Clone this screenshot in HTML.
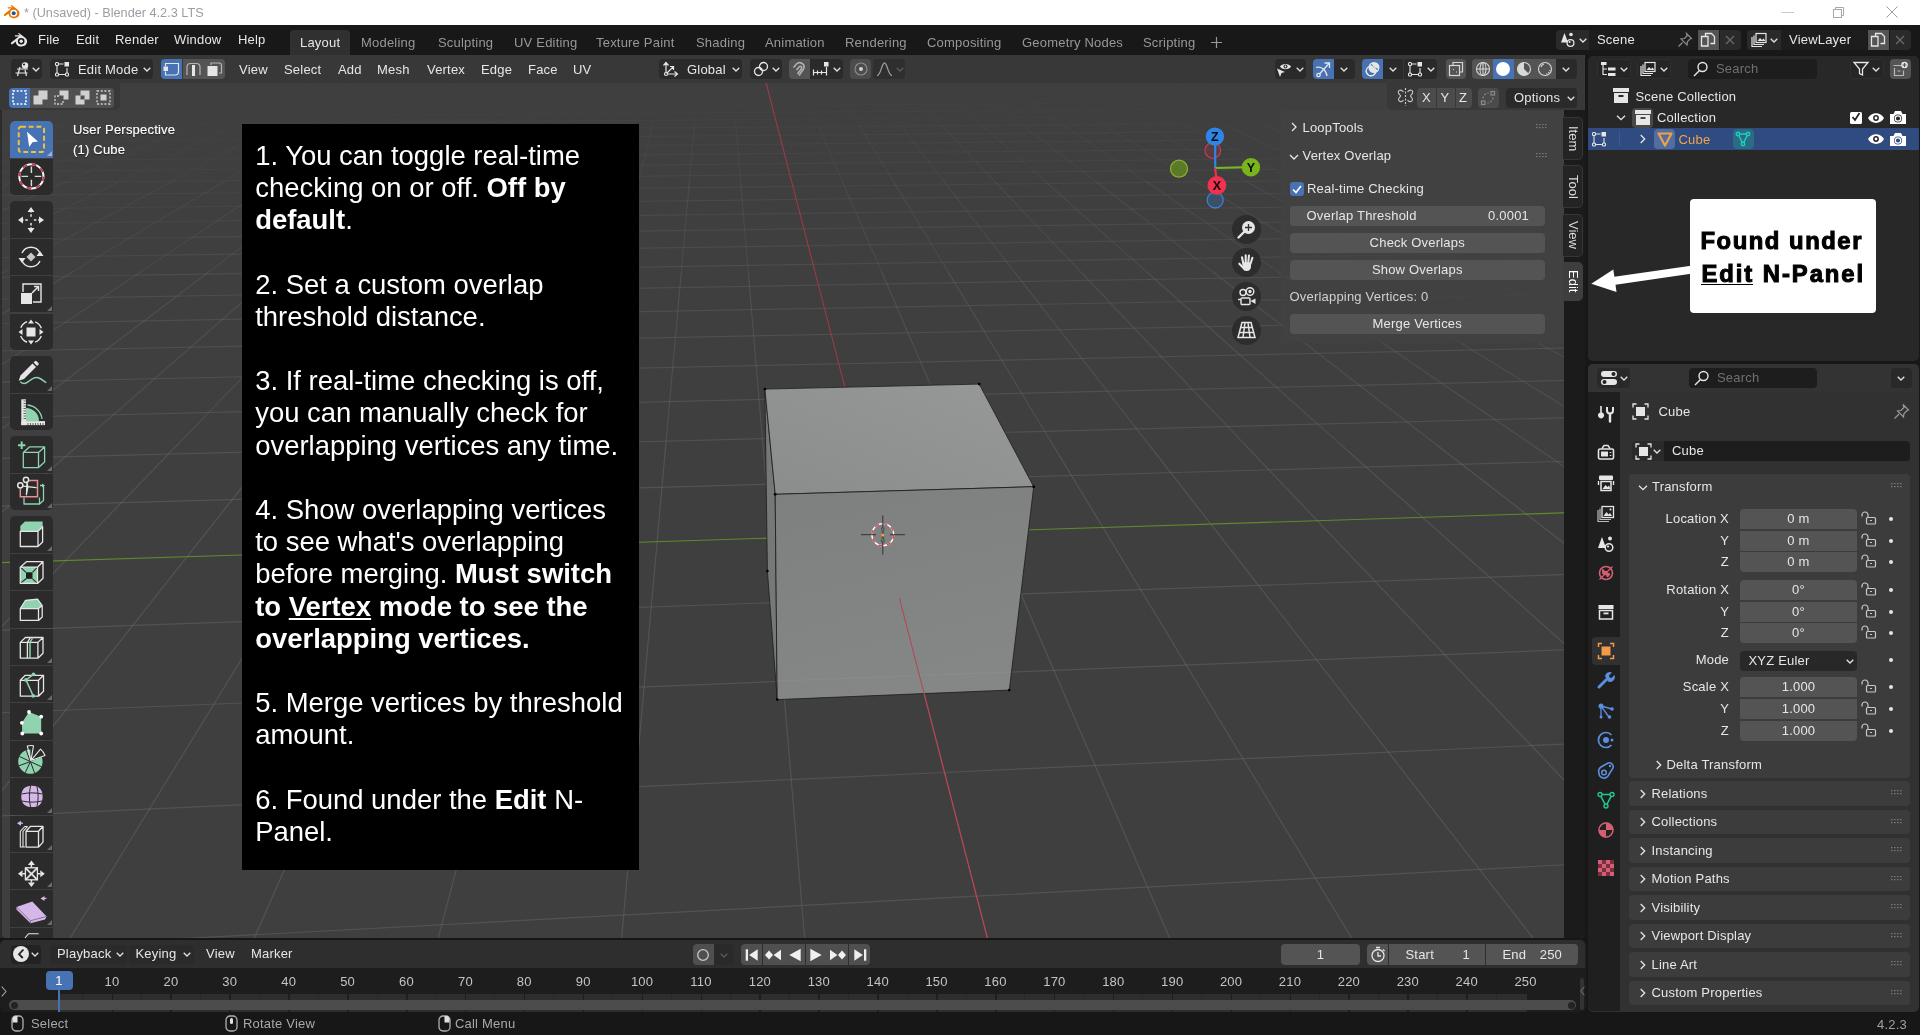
<!DOCTYPE html>
<html><head><meta charset="utf-8">
<style>
*{box-sizing:border-box;margin:0;padding:0}
html,body{width:1920px;height:1035px;overflow:hidden;background:#171717;font-family:"Liberation Sans",sans-serif;font-size:12.5px;color:#e0e0e0}
.abs{position:absolute}
.t{position:absolute;white-space:nowrap;line-height:1}
#title{position:absolute;left:0;top:0;width:1920px;height:25px;background:#fff}
#topbar{position:absolute;left:0;top:25px;width:1920px;height:30px;background:#181818}
#vp{position:absolute;left:0;top:55px;width:1585px;height:883px;background:#3f3f3f;overflow:hidden;border-radius:0 0 5px 5px}
#outl{position:absolute;left:1588px;top:55.5px;width:330.7px;height:305.5px;background:#282828;border-radius:5px;overflow:hidden}
#props{position:absolute;left:1588px;top:364px;width:330.7px;height:647.5px;background:#313131;border-radius:5px;overflow:hidden}
#tl{position:absolute;left:0;top:940px;width:1586px;height:72px;background:#1d1d1d;border-radius:5px;overflow:hidden}
#status{position:absolute;left:0;top:1012px;width:1920px;height:23px;background:#171717}

.b{position:absolute;height:20px;border-radius:4px;background:#2a2a2a}
.b.l{background:#545454}
.b.a{background:#4772b3}
.x{position:absolute;white-space:nowrap;font-size:13px;line-height:20px;height:20px;color:#e6e6e6;letter-spacing:.2px}
.x.d{color:#989898}
svg{position:absolute;overflow:visible}
.chev{position:absolute;width:8px;height:5px}
</style></head><body>
<div id="wrap" style="position:absolute;left:0;top:0;width:1920px;height:1035px;will-change:transform">
<div id="title">
<svg style="left:2.500px;top:4px" width="17" height="16" viewBox="0 0 17 16"><path d="M1.2 10.2 L8.3 4.6 L5.2 4.6 C4.3 4.6 4.3 3.3 5.2 3.3 L9.6 3.3 L8.2 2.2 C7.5 1.6 8.3 0.7 9 1.3 L15 6 C17.6 8.4 16.6 12.2 14 13.6 C11.2 15.2 7.3 14.3 6 11.6 C5.6 10.8 5.6 10 5.7 9.5 L2.3 12 C1.3 12.7 0.4 11 1.2 10.2Z" fill="#ea7600"/><circle cx="10.7" cy="9.2" r="3.4" fill="#fff"/><circle cx="10.7" cy="9.2" r="2" fill="#265787"/></svg>
<div class="x" style="left:24px;top:3px;font-size:12.7px;color:#9a9ea3;letter-spacing:0">* (Unsaved) - Blender 4.2.3 LTS</div>
<svg style="left:1786px;top:4px" width="120" height="18" viewBox="0 0 120 18" fill="none" stroke="#a8a8a8" stroke-width="1"><path d="M-4.500 8.500h12.500" stroke="#c8c8c8"/><rect x="47.5" y="5.5" width="8" height="8"/><path d="M49.5 5.5v-2h8v8h-2"/><path d="M100.500 2.500l11 11M111.500 2.500l-11 11" stroke="#a0a0a0"/></svg>
</div>
<div id="topbar">
<svg style="left:10px;top:7px" width="18" height="16" viewBox="0 0 18 16"><path d="M1.200 10.400L8.800 4.600H5.400C4.500 4.600 4.500 3.300 5.400 3.300H10L8.500 2.100C7.800 1.500 8.600.6 9.300 1.200L15.500 6C18.200 8.400 17.200 12.300 14.500 13.800 11.600 15.400 7.600 14.500 6.200 11.700 5.800 10.900 5.800 10.100 5.900 9.600L2.400 12.200C1.400 12.900.4 11.200 1.200 10.400Z" fill="#e6e6e6"/><circle cx="11.200" cy="9.300" r="3.300" fill="#181818"/><circle cx="11.200" cy="9.300" r="1.700" fill="#e6e6e6"/></svg>
<div class="x" style="left:38px;top:5px">File</div>
<div class="x" style="left:76px;top:5px">Edit</div>
<div class="x" style="left:115px;top:5px">Render</div>
<div class="x" style="left:174px;top:5px">Window</div>
<div class="x" style="left:238px;top:5px">Help</div>
<div class="abs" style="left:290px;top:5px;width:60px;height:25px;background:#303030;border-radius:4px 4px 0 0"></div><div class="x" style="left:300px;top:7.500px">Layout</div>
<div class="x d" style="left:361px;top:7.500px">Modeling</div>
<div class="x d" style="left:438px;top:7.500px">Sculpting</div>
<div class="x d" style="left:514px;top:7.500px">UV Editing</div>
<div class="x d" style="left:596px;top:7.500px">Texture Paint</div>
<div class="x d" style="left:696px;top:7.500px">Shading</div>
<div class="x d" style="left:765px;top:7.500px">Animation</div>
<div class="x d" style="left:845px;top:7.500px">Rendering</div>
<div class="x d" style="left:927px;top:7.500px">Compositing</div>
<div class="x d" style="left:1022px;top:7.500px">Geometry Nodes</div>
<div class="x d" style="left:1143px;top:7.500px">Scripting</div>
<svg style="left:1211px;top:12px" width="11" height="11" viewBox="0 0 11 11"><path d="M5.500 0v11M0 5.500h11" stroke="#989898" stroke-width="1.200"/></svg>
<div class="b" style="left:1556px;top:5px;width:33px;border-radius:4px 0 0 4px"></div><div class="b" style="left:1589px;top:5px;width:108px;background:#1d1d1d;border-radius:0"></div><div class="x" style="left:1597px;top:5px">Scene</div><div class="b l" style="left:1697.500px;top:5px;width:21.500px;border-radius:0"></div><div class="b" style="left:1719.500px;top:5px;width:21.500px;border-radius:0 4px 4px 0"></div><div class="b" style="left:1747px;top:5px;width:34px;border-radius:4px 0 0 4px"></div><div class="b" style="left:1781px;top:5px;width:86px;background:#1d1d1d;border-radius:0"></div><div class="x" style="left:1789px;top:5px">ViewLayer</div><div class="b l" style="left:1867.500px;top:5px;width:21.500px;border-radius:0"></div><div class="b" style="left:1889.500px;top:5px;width:21.500px;border-radius:0 4px 4px 0"></div>
<svg style="left:1579px;top:13px" width="8" height="5" viewBox="0 0 8 5"><path d="M0.700 0.700L4 4l3.300-3.300" fill="none" stroke="#e0e0e0" stroke-width="1.3"/></svg><svg style="left:1770px;top:13px" width="8" height="5" viewBox="0 0 8 5"><path d="M0.700 0.700L4 4l3.300-3.300" fill="none" stroke="#e0e0e0" stroke-width="1.3"/></svg><svg style="left:1560px;top:7px" width="17" height="16" viewBox="0 0 17 16"><path d="M4.500 1L8 10.500H1Z" fill="#e6e6e6"/><circle cx="11" cy="2.500" r="1.800" fill="#e6e6e6"/><circle cx="10.500" cy="11" r="3.400" fill="#2a2a2a" stroke="#e6e6e6" stroke-width="1.300"/><circle cx="9.600" cy="10" r="1" fill="#e6e6e6"/></svg><svg style="left:1677px;top:7px" width="16" height="16" viewBox="0 0 16 16" fill="none" stroke="#8c8c8c" stroke-width="1.200"><path d="M9.500 1.500l5 5-1.500.5-2.500 2.500-.5 3.500-6-6 3.500-.5L10 4zM5.500 10.500l-4 4"/></svg><svg style="left:1700px;top:7px" width="16" height="16" viewBox="0 0 16 16" fill="none" stroke="#e6e6e6" stroke-width="1.300"><path d="M5.500 4.500v-3h6l3 3v7h-4"/><path d="M1.500 4.500h6.500v9.500h-6.500z" /></svg><svg style="left:1725px;top:10px" width="10" height="10" viewBox="0 0 10 10"><path d="M1 1l8 8M9 1l-8 8" stroke="#6a6a6a" stroke-width="1.300"/></svg><svg style="left:1870px;top:7px" width="16" height="16" viewBox="0 0 16 16" fill="none" stroke="#e6e6e6" stroke-width="1.300"><path d="M5.500 4.500v-3h6l3 3v7h-4"/><path d="M1.500 4.500h6.500v9.500h-6.500z" /></svg><svg style="left:1895px;top:10px" width="10" height="10" viewBox="0 0 10 10"><path d="M1 1l8 8M9 1l-8 8" stroke="#6a6a6a" stroke-width="1.300"/></svg><svg style="left:1751px;top:7px" width="17" height="16" viewBox="0 0 17 16" fill="none" stroke="#e6e6e6" stroke-width="1.200"><path d="M1 5v9.500h10"/><path d="M3 3.500v9h10"/><rect x="5" y="1.500" width="10" height="9" fill="#2a2a2a"/><path d="M6.500 9l2.500-3 2 2 1.500-1.500 2 2.500z" fill="#e6e6e6" stroke="none"/></svg>
</div>
<div id="vp">
<svg class="abs" style="left:0;top:0" width="1586" height="883" viewBox="0 55 1586 883">
<line x1="405.4" y1="95.2" x2="768.7" y2="93.1" stroke="#6c6c6c" stroke-opacity="0.03" stroke-width="1.2"/>
<line x1="768.7" y1="93.1" x2="1117.3" y2="91.0" stroke="#6c6c6c" stroke-opacity="0.03" stroke-width="1.2"/>
<line x1="396.1" y1="101.4" x2="770.3" y2="99.1" stroke="#6c6c6c" stroke-opacity="0.04" stroke-width="1.2"/>
<line x1="770.3" y1="99.1" x2="1128.8" y2="96.9" stroke="#6c6c6c" stroke-opacity="0.04" stroke-width="1.2"/>
<line x1="-17.2" y1="110.7" x2="386.3" y2="108.0" stroke="#6c6c6c" stroke-opacity="0.02" stroke-width="1.2"/>
<line x1="386.3" y1="108.0" x2="771.9" y2="105.5" stroke="#6c6c6c" stroke-opacity="0.06" stroke-width="1.2"/>
<line x1="771.9" y1="105.5" x2="1141.0" y2="103.0" stroke="#6c6c6c" stroke-opacity="0.05" stroke-width="1.2"/>
<line x1="-41.0" y1="117.9" x2="375.8" y2="115.0" stroke="#6c6c6c" stroke-opacity="0.03" stroke-width="1.2"/>
<line x1="375.8" y1="115.0" x2="773.7" y2="112.2" stroke="#6c6c6c" stroke-opacity="0.07" stroke-width="1.2"/>
<line x1="773.7" y1="112.2" x2="1153.9" y2="109.6" stroke="#6c6c6c" stroke-opacity="0.07" stroke-width="1.2"/>
<line x1="-66.5" y1="125.7" x2="364.6" y2="122.5" stroke="#6c6c6c" stroke-opacity="0.05" stroke-width="1.2"/>
<line x1="364.6" y1="122.5" x2="775.5" y2="119.4" stroke="#6c6c6c" stroke-opacity="0.09" stroke-width="1.2"/>
<line x1="775.5" y1="119.4" x2="1167.7" y2="116.5" stroke="#6c6c6c" stroke-opacity="0.08" stroke-width="1.2"/>
<line x1="1167.7" y1="116.5" x2="1542.3" y2="113.7" stroke="#6c6c6c" stroke-opacity="0.03" stroke-width="1.2"/>
<line x1="-93.8" y1="133.9" x2="352.7" y2="130.4" stroke="#6c6c6c" stroke-opacity="0.06" stroke-width="1.2"/>
<line x1="352.7" y1="130.4" x2="777.5" y2="127.1" stroke="#6c6c6c" stroke-opacity="0.10" stroke-width="1.2"/>
<line x1="777.5" y1="127.1" x2="1182.3" y2="123.9" stroke="#6c6c6c" stroke-opacity="0.10" stroke-width="1.2"/>
<line x1="1182.3" y1="123.9" x2="1568.4" y2="120.9" stroke="#6c6c6c" stroke-opacity="0.04" stroke-width="1.2"/>
<line x1="-20.4" y1="124.7" x2="-194.2" y2="180.5" stroke="#6c6c6c" stroke-opacity="0.05" stroke-width="1.2"/>
<line x1="-123.0" y1="142.8" x2="339.9" y2="139.0" stroke="#6c6c6c" stroke-opacity="0.07" stroke-width="1.2"/>
<line x1="339.9" y1="139.0" x2="779.6" y2="135.3" stroke="#6c6c6c" stroke-opacity="0.12" stroke-width="1.2"/>
<line x1="779.6" y1="135.3" x2="1197.9" y2="131.8" stroke="#6c6c6c" stroke-opacity="0.11" stroke-width="1.2"/>
<line x1="1197.9" y1="131.8" x2="1596.3" y2="128.5" stroke="#6c6c6c" stroke-opacity="0.05" stroke-width="1.2"/>
<line x1="22.4" y1="124.7" x2="-141.4" y2="180.6" stroke="#6c6c6c" stroke-opacity="0.06" stroke-width="1.2"/>
<line x1="-154.4" y1="152.4" x2="326.2" y2="148.1" stroke="#6c6c6c" stroke-opacity="0.08" stroke-width="1.2"/>
<line x1="326.2" y1="148.1" x2="781.9" y2="144.1" stroke="#6c6c6c" stroke-opacity="0.14" stroke-width="1.2"/>
<line x1="781.9" y1="144.1" x2="1214.6" y2="140.2" stroke="#6c6c6c" stroke-opacity="0.13" stroke-width="1.2"/>
<line x1="1214.6" y1="140.2" x2="1626.0" y2="136.6" stroke="#6c6c6c" stroke-opacity="0.06" stroke-width="1.2"/>
<line x1="65.0" y1="124.7" x2="-88.6" y2="180.6" stroke="#6c6c6c" stroke-opacity="0.07" stroke-width="1.2"/>
<line x1="-188.3" y1="162.7" x2="311.4" y2="158.0" stroke="#6c6c6c" stroke-opacity="0.10" stroke-width="1.2"/>
<line x1="311.4" y1="158.0" x2="784.4" y2="153.5" stroke="#6c6c6c" stroke-opacity="0.15" stroke-width="1.2"/>
<line x1="784.4" y1="153.5" x2="1232.5" y2="149.3" stroke="#6c6c6c" stroke-opacity="0.14" stroke-width="1.2"/>
<line x1="1232.5" y1="149.3" x2="1657.9" y2="145.3" stroke="#6c6c6c" stroke-opacity="0.08" stroke-width="1.2"/>
<line x1="107.6" y1="124.7" x2="-36.0" y2="180.6" stroke="#6c6c6c" stroke-opacity="0.08" stroke-width="1.2"/>
<line x1="-36.0" y1="180.6" x2="-268.5" y2="271.1" stroke="#6c6c6c" stroke-opacity="0.15" stroke-width="1.2"/>
<line x1="-224.9" y1="173.8" x2="295.5" y2="168.6" stroke="#6c6c6c" stroke-opacity="0.11" stroke-width="1.2"/>
<line x1="295.5" y1="168.6" x2="787.0" y2="163.7" stroke="#6c6c6c" stroke-opacity="0.17" stroke-width="1.2"/>
<line x1="787.0" y1="163.7" x2="1251.8" y2="159.0" stroke="#6c6c6c" stroke-opacity="0.16" stroke-width="1.2"/>
<line x1="1251.8" y1="159.0" x2="1692.0" y2="154.6" stroke="#6c6c6c" stroke-opacity="0.09" stroke-width="1.2"/>
<line x1="150.1" y1="124.7" x2="16.5" y2="180.6" stroke="#6c6c6c" stroke-opacity="0.08" stroke-width="1.2"/>
<line x1="16.5" y1="180.6" x2="-199.8" y2="271.1" stroke="#6c6c6c" stroke-opacity="0.16" stroke-width="1.2"/>
<line x1="-264.6" y1="185.8" x2="278.3" y2="180.1" stroke="#6c6c6c" stroke-opacity="0.13" stroke-width="1.2"/>
<line x1="278.3" y1="180.1" x2="789.8" y2="174.6" stroke="#6c6c6c" stroke-opacity="0.19" stroke-width="1.2"/>
<line x1="789.8" y1="174.6" x2="1272.5" y2="169.5" stroke="#6c6c6c" stroke-opacity="0.18" stroke-width="1.2"/>
<line x1="1272.5" y1="169.5" x2="1728.7" y2="164.6" stroke="#6c6c6c" stroke-opacity="0.10" stroke-width="1.2"/>
<line x1="192.4" y1="124.7" x2="68.8" y2="180.6" stroke="#6c6c6c" stroke-opacity="0.09" stroke-width="1.2"/>
<line x1="68.8" y1="180.6" x2="-131.2" y2="271.1" stroke="#6c6c6c" stroke-opacity="0.17" stroke-width="1.2"/>
<line x1="-307.8" y1="199.0" x2="259.7" y2="192.5" stroke="#6c6c6c" stroke-opacity="0.14" stroke-width="1.2"/>
<line x1="259.7" y1="192.5" x2="792.9" y2="186.5" stroke="#6c6c6c" stroke-opacity="0.21" stroke-width="1.2"/>
<line x1="792.9" y1="186.5" x2="1294.9" y2="180.8" stroke="#6c6c6c" stroke-opacity="0.19" stroke-width="1.2"/>
<line x1="1294.9" y1="180.8" x2="1768.3" y2="175.4" stroke="#6c6c6c" stroke-opacity="0.12" stroke-width="1.2"/>
<line x1="311.9" y1="86.8" x2="234.7" y2="124.7" stroke="#6c6c6c" stroke-opacity="0.02" stroke-width="1.2"/>
<line x1="234.7" y1="124.7" x2="121.1" y2="180.7" stroke="#6c6c6c" stroke-opacity="0.10" stroke-width="1.2"/>
<line x1="121.1" y1="180.7" x2="-62.8" y2="271.2" stroke="#6c6c6c" stroke-opacity="0.18" stroke-width="1.2"/>
<line x1="-355.0" y1="213.3" x2="239.3" y2="206.1" stroke="#6c6c6c" stroke-opacity="0.15" stroke-width="1.2"/>
<line x1="239.3" y1="206.1" x2="796.2" y2="199.4" stroke="#6c6c6c" stroke-opacity="0.22" stroke-width="1.2"/>
<line x1="796.2" y1="199.4" x2="1319.1" y2="193.0" stroke="#6c6c6c" stroke-opacity="0.21" stroke-width="1.2"/>
<line x1="1319.1" y1="193.0" x2="1811.0" y2="187.1" stroke="#6c6c6c" stroke-opacity="0.13" stroke-width="1.2"/>
<line x1="347.3" y1="86.8" x2="277.0" y2="124.8" stroke="#6c6c6c" stroke-opacity="0.03" stroke-width="1.2"/>
<line x1="277.0" y1="124.8" x2="173.3" y2="180.7" stroke="#6c6c6c" stroke-opacity="0.11" stroke-width="1.2"/>
<line x1="173.3" y1="180.7" x2="5.5" y2="271.2" stroke="#6c6c6c" stroke-opacity="0.19" stroke-width="1.2"/>
<line x1="5.5" y1="271.2" x2="-312.5" y2="442.8" stroke="#6c6c6c" stroke-opacity="0.28" stroke-width="1.2"/>
<line x1="-406.8" y1="229.0" x2="217.1" y2="221.0" stroke="#6c6c6c" stroke-opacity="0.17" stroke-width="1.2"/>
<line x1="217.1" y1="221.0" x2="799.9" y2="213.4" stroke="#6c6c6c" stroke-opacity="0.24" stroke-width="1.2"/>
<line x1="799.9" y1="213.4" x2="1345.5" y2="206.4" stroke="#6c6c6c" stroke-opacity="0.23" stroke-width="1.2"/>
<line x1="1345.5" y1="206.4" x2="1857.4" y2="199.8" stroke="#6c6c6c" stroke-opacity="0.14" stroke-width="1.2"/>
<line x1="382.7" y1="86.8" x2="319.1" y2="124.8" stroke="#6c6c6c" stroke-opacity="0.03" stroke-width="1.2"/>
<line x1="319.1" y1="124.8" x2="225.4" y2="180.7" stroke="#6c6c6c" stroke-opacity="0.11" stroke-width="1.2"/>
<line x1="225.4" y1="180.7" x2="73.7" y2="271.2" stroke="#6c6c6c" stroke-opacity="0.20" stroke-width="1.2"/>
<line x1="73.7" y1="271.2" x2="-213.8" y2="442.8" stroke="#6c6c6c" stroke-opacity="0.30" stroke-width="1.2"/>
<line x1="-463.8" y1="246.3" x2="192.7" y2="237.3" stroke="#6c6c6c" stroke-opacity="0.18" stroke-width="1.2"/>
<line x1="192.7" y1="237.3" x2="803.8" y2="228.8" stroke="#6c6c6c" stroke-opacity="0.26" stroke-width="1.2"/>
<line x1="803.8" y1="228.8" x2="1374.3" y2="220.9" stroke="#6c6c6c" stroke-opacity="0.25" stroke-width="1.2"/>
<line x1="1374.3" y1="220.9" x2="1907.9" y2="213.6" stroke="#6c6c6c" stroke-opacity="0.15" stroke-width="1.2"/>
<line x1="418.0" y1="86.8" x2="361.1" y2="124.8" stroke="#6c6c6c" stroke-opacity="0.04" stroke-width="1.2"/>
<line x1="361.1" y1="124.8" x2="277.4" y2="180.7" stroke="#6c6c6c" stroke-opacity="0.12" stroke-width="1.2"/>
<line x1="277.4" y1="180.7" x2="141.8" y2="271.3" stroke="#6c6c6c" stroke-opacity="0.21" stroke-width="1.2"/>
<line x1="141.8" y1="271.3" x2="-115.3" y2="442.9" stroke="#6c6c6c" stroke-opacity="0.31" stroke-width="1.2"/>
<line x1="-526.9" y1="265.5" x2="165.7" y2="255.2" stroke="#6c6c6c" stroke-opacity="0.20" stroke-width="1.2"/>
<line x1="165.7" y1="255.2" x2="808.2" y2="245.7" stroke="#6c6c6c" stroke-opacity="0.28" stroke-width="1.2"/>
<line x1="808.2" y1="245.7" x2="1405.8" y2="236.9" stroke="#6c6c6c" stroke-opacity="0.26" stroke-width="1.2"/>
<line x1="1405.8" y1="236.9" x2="1963.1" y2="228.6" stroke="#6c6c6c" stroke-opacity="0.17" stroke-width="1.2"/>
<line x1="453.2" y1="86.8" x2="403.1" y2="124.8" stroke="#6c6c6c" stroke-opacity="0.04" stroke-width="1.2"/>
<line x1="403.1" y1="124.8" x2="329.2" y2="180.7" stroke="#6c6c6c" stroke-opacity="0.13" stroke-width="1.2"/>
<line x1="329.2" y1="180.7" x2="209.7" y2="271.3" stroke="#6c6c6c" stroke-opacity="0.22" stroke-width="1.2"/>
<line x1="209.7" y1="271.3" x2="-17.0" y2="443.0" stroke="#6c6c6c" stroke-opacity="0.32" stroke-width="1.2"/>
<line x1="-17.0" y1="443.0" x2="-611.7" y2="893.4" stroke="#6c6c6c" stroke-opacity="0.41" stroke-width="1.2"/>
<line x1="-597.1" y1="286.8" x2="135.9" y2="275.2" stroke="#6c6c6c" stroke-opacity="0.21" stroke-width="1.2"/>
<line x1="135.9" y1="275.2" x2="813.1" y2="264.4" stroke="#6c6c6c" stroke-opacity="0.30" stroke-width="1.2"/>
<line x1="813.1" y1="264.4" x2="1440.6" y2="254.4" stroke="#6c6c6c" stroke-opacity="0.28" stroke-width="1.2"/>
<line x1="1440.6" y1="254.4" x2="2023.7" y2="245.1" stroke="#6c6c6c" stroke-opacity="0.18" stroke-width="1.2"/>
<line x1="488.4" y1="86.8" x2="445.0" y2="124.8" stroke="#6c6c6c" stroke-opacity="0.04" stroke-width="1.2"/>
<line x1="445.0" y1="124.8" x2="381.0" y2="180.8" stroke="#6c6c6c" stroke-opacity="0.13" stroke-width="1.2"/>
<line x1="381.0" y1="180.8" x2="277.4" y2="271.3" stroke="#6c6c6c" stroke-opacity="0.23" stroke-width="1.2"/>
<line x1="277.4" y1="271.3" x2="81.1" y2="443.0" stroke="#6c6c6c" stroke-opacity="0.33" stroke-width="1.2"/>
<line x1="81.1" y1="443.0" x2="-434.0" y2="893.6" stroke="#6c6c6c" stroke-opacity="0.42" stroke-width="1.2"/>
<line x1="-675.8" y1="310.7" x2="102.6" y2="297.4" stroke="#6c6c6c" stroke-opacity="0.22" stroke-width="1.2"/>
<line x1="102.6" y1="297.4" x2="818.4" y2="285.1" stroke="#6c6c6c" stroke-opacity="0.32" stroke-width="1.2"/>
<line x1="818.4" y1="285.1" x2="1479.0" y2="273.8" stroke="#6c6c6c" stroke-opacity="0.30" stroke-width="1.2"/>
<line x1="1479.0" y1="273.8" x2="2090.4" y2="263.4" stroke="#6c6c6c" stroke-opacity="0.19" stroke-width="1.2"/>
<line x1="523.5" y1="86.8" x2="486.8" y2="124.8" stroke="#6c6c6c" stroke-opacity="0.05" stroke-width="1.2"/>
<line x1="486.8" y1="124.8" x2="432.7" y2="180.8" stroke="#6c6c6c" stroke-opacity="0.14" stroke-width="1.2"/>
<line x1="432.7" y1="180.8" x2="345.1" y2="271.4" stroke="#6c6c6c" stroke-opacity="0.23" stroke-width="1.2"/>
<line x1="345.1" y1="271.4" x2="179.0" y2="443.1" stroke="#6c6c6c" stroke-opacity="0.34" stroke-width="1.2"/>
<line x1="179.0" y1="443.1" x2="-256.7" y2="893.8" stroke="#6c6c6c" stroke-opacity="0.43" stroke-width="1.2"/>
<line x1="-764.5" y1="337.7" x2="65.3" y2="322.3" stroke="#6c6c6c" stroke-opacity="0.24" stroke-width="1.2"/>
<line x1="65.3" y1="322.3" x2="824.4" y2="308.3" stroke="#6c6c6c" stroke-opacity="0.33" stroke-width="1.2"/>
<line x1="824.4" y1="308.3" x2="1521.7" y2="295.4" stroke="#6c6c6c" stroke-opacity="0.32" stroke-width="1.2"/>
<line x1="1521.7" y1="295.4" x2="2164.2" y2="283.5" stroke="#6c6c6c" stroke-opacity="0.20" stroke-width="1.2"/>
<line x1="558.5" y1="86.8" x2="528.5" y2="124.8" stroke="#6c6c6c" stroke-opacity="0.05" stroke-width="1.2"/>
<line x1="528.5" y1="124.8" x2="484.2" y2="180.8" stroke="#6c6c6c" stroke-opacity="0.14" stroke-width="1.2"/>
<line x1="484.2" y1="180.8" x2="412.6" y2="271.4" stroke="#6c6c6c" stroke-opacity="0.24" stroke-width="1.2"/>
<line x1="412.6" y1="271.4" x2="276.8" y2="443.2" stroke="#6c6c6c" stroke-opacity="0.35" stroke-width="1.2"/>
<line x1="276.8" y1="443.2" x2="-79.6" y2="894.0" stroke="#6c6c6c" stroke-opacity="0.43" stroke-width="1.2"/>
<line x1="-865.2" y1="368.3" x2="23.1" y2="350.5" stroke="#6c6c6c" stroke-opacity="0.25" stroke-width="1.2"/>
<line x1="23.1" y1="350.5" x2="831.2" y2="334.3" stroke="#6c6c6c" stroke-opacity="0.35" stroke-width="1.2"/>
<line x1="831.2" y1="334.3" x2="1569.4" y2="319.5" stroke="#6c6c6c" stroke-opacity="0.33" stroke-width="1.2"/>
<line x1="1569.4" y1="319.5" x2="2246.5" y2="306.0" stroke="#6c6c6c" stroke-opacity="0.22" stroke-width="1.2"/>
<line x1="593.5" y1="86.8" x2="570.1" y2="124.8" stroke="#6c6c6c" stroke-opacity="0.05" stroke-width="1.2"/>
<line x1="570.1" y1="124.8" x2="535.7" y2="180.8" stroke="#6c6c6c" stroke-opacity="0.14" stroke-width="1.2"/>
<line x1="535.7" y1="180.8" x2="480.0" y2="271.4" stroke="#6c6c6c" stroke-opacity="0.24" stroke-width="1.2"/>
<line x1="480.0" y1="271.4" x2="374.3" y2="443.2" stroke="#6c6c6c" stroke-opacity="0.35" stroke-width="1.2"/>
<line x1="374.3" y1="443.2" x2="97.1" y2="894.2" stroke="#6c6c6c" stroke-opacity="0.43" stroke-width="1.2"/>
<line x1="97.1" y1="894.2" x2="-2578.7" y2="5246.6" stroke="#6c6c6c" stroke-opacity="0.43" stroke-width="1.2"/>
<line x1="-980.7" y1="403.4" x2="-25.0" y2="382.6" stroke="#6c6c6c" stroke-opacity="0.26" stroke-width="1.2"/>
<line x1="-25.0" y1="382.6" x2="838.8" y2="363.8" stroke="#6c6c6c" stroke-opacity="0.37" stroke-width="1.2"/>
<line x1="838.8" y1="363.8" x2="1623.2" y2="346.7" stroke="#6c6c6c" stroke-opacity="0.35" stroke-width="1.2"/>
<line x1="1623.2" y1="346.7" x2="2338.7" y2="331.2" stroke="#6c6c6c" stroke-opacity="0.23" stroke-width="1.2"/>
<line x1="628.3" y1="86.9" x2="611.6" y2="124.9" stroke="#6c6c6c" stroke-opacity="0.06" stroke-width="1.2"/>
<line x1="611.6" y1="124.9" x2="587.0" y2="180.8" stroke="#6c6c6c" stroke-opacity="0.15" stroke-width="1.2"/>
<line x1="587.0" y1="180.8" x2="547.2" y2="271.4" stroke="#6c6c6c" stroke-opacity="0.25" stroke-width="1.2"/>
<line x1="547.2" y1="271.4" x2="471.7" y2="443.3" stroke="#6c6c6c" stroke-opacity="0.36" stroke-width="1.2"/>
<line x1="471.7" y1="443.3" x2="273.5" y2="894.4" stroke="#6c6c6c" stroke-opacity="0.43" stroke-width="1.2"/>
<line x1="273.5" y1="894.4" x2="-1641.1" y2="5252.3" stroke="#6c6c6c" stroke-opacity="0.43" stroke-width="1.2"/>
<line x1="-80.1" y1="419.4" x2="847.5" y2="397.4" stroke="#6c6c6c" stroke-opacity="0.39" stroke-width="1.2"/>
<line x1="847.5" y1="397.4" x2="1684.2" y2="377.6" stroke="#6c6c6c" stroke-opacity="0.37" stroke-width="1.2"/>
<line x1="663.1" y1="86.9" x2="653.1" y2="124.9" stroke="#6c6c6c" stroke-opacity="0.06" stroke-width="1.2"/>
<line x1="653.1" y1="124.9" x2="638.3" y2="180.9" stroke="#6c6c6c" stroke-opacity="0.15" stroke-width="1.2"/>
<line x1="638.3" y1="180.9" x2="614.3" y2="271.5" stroke="#6c6c6c" stroke-opacity="0.25" stroke-width="1.2"/>
<line x1="614.3" y1="271.5" x2="568.9" y2="443.4" stroke="#6c6c6c" stroke-opacity="0.36" stroke-width="1.2"/>
<line x1="568.9" y1="443.4" x2="449.7" y2="894.6" stroke="#6c6c6c" stroke-opacity="0.43" stroke-width="1.2"/>
<line x1="449.7" y1="894.6" x2="-703.4" y2="5257.9" stroke="#6c6c6c" stroke-opacity="0.43" stroke-width="1.2"/>
<line x1="-144.2" y1="462.2" x2="857.5" y2="436.2" stroke="#6c6c6c" stroke-opacity="0.41" stroke-width="1.2"/>
<line x1="857.5" y1="436.2" x2="1754.0" y2="412.8" stroke="#6c6c6c" stroke-opacity="0.39" stroke-width="1.2"/>
<line x1="697.9" y1="86.9" x2="694.5" y2="124.9" stroke="#6c6c6c" stroke-opacity="0.06" stroke-width="1.2"/>
<line x1="694.5" y1="124.9" x2="689.4" y2="180.9" stroke="#6c6c6c" stroke-opacity="0.15" stroke-width="1.2"/>
<line x1="689.4" y1="180.9" x2="681.3" y2="271.5" stroke="#6c6c6c" stroke-opacity="0.25" stroke-width="1.2"/>
<line x1="681.3" y1="271.5" x2="665.9" y2="443.4" stroke="#6c6c6c" stroke-opacity="0.36" stroke-width="1.2"/>
<line x1="665.9" y1="443.4" x2="625.5" y2="894.8" stroke="#6c6c6c" stroke-opacity="0.43" stroke-width="1.2"/>
<line x1="625.5" y1="894.8" x2="234.3" y2="5263.6" stroke="#6c6c6c" stroke-opacity="0.43" stroke-width="1.2"/>
<line x1="-219.5" y1="512.5" x2="869.2" y2="481.3" stroke="#6c6c6c" stroke-opacity="0.43" stroke-width="1.2"/>
<line x1="869.2" y1="481.3" x2="1834.6" y2="453.6" stroke="#6c6c6c" stroke-opacity="0.40" stroke-width="1.2"/>
<line x1="732.5" y1="86.9" x2="735.8" y2="124.9" stroke="#6c6c6c" stroke-opacity="0.06" stroke-width="1.2"/>
<line x1="735.8" y1="124.9" x2="740.5" y2="180.9" stroke="#6c6c6c" stroke-opacity="0.15" stroke-width="1.2"/>
<line x1="740.5" y1="180.9" x2="748.2" y2="271.5" stroke="#6c6c6c" stroke-opacity="0.25" stroke-width="1.2"/>
<line x1="748.2" y1="271.5" x2="762.8" y2="443.5" stroke="#6c6c6c" stroke-opacity="0.37" stroke-width="1.2"/>
<line x1="762.8" y1="443.5" x2="801.0" y2="895.0" stroke="#6c6c6c" stroke-opacity="0.43" stroke-width="1.2"/>
<line x1="801.0" y1="895.0" x2="1171.9" y2="5269.3" stroke="#6c6c6c" stroke-opacity="0.43" stroke-width="1.2"/>
<line x1="-418.1" y1="645.1" x2="899.4" y2="598.2" stroke="#6c6c6c" stroke-opacity="0.43" stroke-width="1.2"/>
<line x1="899.4" y1="598.2" x2="2040.3" y2="557.6" stroke="#6c6c6c" stroke-opacity="0.43" stroke-width="1.2"/>
<line x1="801.6" y1="86.9" x2="818.1" y2="124.9" stroke="#6c6c6c" stroke-opacity="0.06" stroke-width="1.2"/>
<line x1="818.1" y1="124.9" x2="842.3" y2="180.9" stroke="#6c6c6c" stroke-opacity="0.15" stroke-width="1.2"/>
<line x1="842.3" y1="180.9" x2="881.5" y2="271.6" stroke="#6c6c6c" stroke-opacity="0.25" stroke-width="1.2"/>
<line x1="881.5" y1="271.6" x2="955.9" y2="443.6" stroke="#6c6c6c" stroke-opacity="0.36" stroke-width="1.2"/>
<line x1="955.9" y1="443.6" x2="1151.2" y2="895.4" stroke="#6c6c6c" stroke-opacity="0.43" stroke-width="1.2"/>
<line x1="1151.2" y1="895.4" x2="3047.3" y2="5280.7" stroke="#6c6c6c" stroke-opacity="0.43" stroke-width="1.2"/>
<line x1="-552.8" y1="735.0" x2="919.5" y2="675.8" stroke="#6c6c6c" stroke-opacity="0.43" stroke-width="1.2"/>
<line x1="919.5" y1="675.8" x2="2174.4" y2="625.3" stroke="#6c6c6c" stroke-opacity="0.43" stroke-width="1.2"/>
<line x1="836.1" y1="86.9" x2="859.1" y2="124.9" stroke="#6c6c6c" stroke-opacity="0.06" stroke-width="1.2"/>
<line x1="859.1" y1="124.9" x2="893.1" y2="180.9" stroke="#6c6c6c" stroke-opacity="0.15" stroke-width="1.2"/>
<line x1="893.1" y1="180.9" x2="948.0" y2="271.6" stroke="#6c6c6c" stroke-opacity="0.25" stroke-width="1.2"/>
<line x1="948.0" y1="271.6" x2="1052.2" y2="443.7" stroke="#6c6c6c" stroke-opacity="0.36" stroke-width="1.2"/>
<line x1="1052.2" y1="443.7" x2="1325.9" y2="895.6" stroke="#6c6c6c" stroke-opacity="0.43" stroke-width="1.2"/>
<line x1="1325.9" y1="895.6" x2="3984.9" y2="5286.3" stroke="#6c6c6c" stroke-opacity="0.43" stroke-width="1.2"/>
<line x1="-723.7" y1="849.2" x2="944.5" y2="772.5" stroke="#6c6c6c" stroke-opacity="0.43" stroke-width="1.2"/>
<line x1="944.5" y1="772.5" x2="2338.7" y2="708.4" stroke="#6c6c6c" stroke-opacity="0.43" stroke-width="1.2"/>
<line x1="870.5" y1="86.9" x2="900.1" y2="125.0" stroke="#6c6c6c" stroke-opacity="0.06" stroke-width="1.2"/>
<line x1="900.1" y1="125.0" x2="943.7" y2="181.0" stroke="#6c6c6c" stroke-opacity="0.15" stroke-width="1.2"/>
<line x1="943.7" y1="181.0" x2="1014.3" y2="271.7" stroke="#6c6c6c" stroke-opacity="0.25" stroke-width="1.2"/>
<line x1="1014.3" y1="271.7" x2="1148.3" y2="443.8" stroke="#6c6c6c" stroke-opacity="0.36" stroke-width="1.2"/>
<line x1="1148.3" y1="443.8" x2="1500.2" y2="895.8" stroke="#6c6c6c" stroke-opacity="0.43" stroke-width="1.2"/>
<line x1="1500.2" y1="895.8" x2="4922.6" y2="5292.0" stroke="#6c6c6c" stroke-opacity="0.43" stroke-width="1.2"/>
<line x1="-948.0" y1="998.9" x2="976.5" y2="896.2" stroke="#6c6c6c" stroke-opacity="0.43" stroke-width="1.2"/>
<line x1="976.5" y1="896.2" x2="2544.8" y2="812.5" stroke="#6c6c6c" stroke-opacity="0.43" stroke-width="1.2"/>
<line x1="904.8" y1="86.9" x2="941.0" y2="125.0" stroke="#6c6c6c" stroke-opacity="0.05" stroke-width="1.2"/>
<line x1="941.0" y1="125.0" x2="994.3" y2="181.0" stroke="#6c6c6c" stroke-opacity="0.14" stroke-width="1.2"/>
<line x1="994.3" y1="181.0" x2="1080.5" y2="271.7" stroke="#6c6c6c" stroke-opacity="0.25" stroke-width="1.2"/>
<line x1="1080.5" y1="271.7" x2="1244.2" y2="443.8" stroke="#6c6c6c" stroke-opacity="0.35" stroke-width="1.2"/>
<line x1="1244.2" y1="443.8" x2="1674.3" y2="896.0" stroke="#6c6c6c" stroke-opacity="0.43" stroke-width="1.2"/>
<line x1="1019.0" y1="1060.2" x2="2810.7" y2="947.0" stroke="#6c6c6c" stroke-opacity="0.43" stroke-width="1.2"/>
<line x1="939.1" y1="86.9" x2="981.8" y2="125.0" stroke="#6c6c6c" stroke-opacity="0.05" stroke-width="1.2"/>
<line x1="981.8" y1="125.0" x2="1044.7" y2="181.0" stroke="#6c6c6c" stroke-opacity="0.14" stroke-width="1.2"/>
<line x1="1044.7" y1="181.0" x2="1146.6" y2="271.7" stroke="#6c6c6c" stroke-opacity="0.24" stroke-width="1.2"/>
<line x1="1146.6" y1="271.7" x2="1340.0" y2="443.9" stroke="#6c6c6c" stroke-opacity="0.34" stroke-width="1.2"/>
<line x1="1340.0" y1="443.9" x2="1848.0" y2="896.3" stroke="#6c6c6c" stroke-opacity="0.43" stroke-width="1.2"/>
<line x1="973.2" y1="86.9" x2="1022.5" y2="125.0" stroke="#6c6c6c" stroke-opacity="0.05" stroke-width="1.2"/>
<line x1="1022.5" y1="125.0" x2="1095.1" y2="181.0" stroke="#6c6c6c" stroke-opacity="0.14" stroke-width="1.2"/>
<line x1="1095.1" y1="181.0" x2="1212.6" y2="271.8" stroke="#6c6c6c" stroke-opacity="0.24" stroke-width="1.2"/>
<line x1="1212.6" y1="271.8" x2="1435.5" y2="444.0" stroke="#6c6c6c" stroke-opacity="0.34" stroke-width="1.2"/>
<line x1="1435.5" y1="444.0" x2="2021.5" y2="896.5" stroke="#6c6c6c" stroke-opacity="0.43" stroke-width="1.2"/>
<line x1="1007.3" y1="87.0" x2="1063.1" y2="125.0" stroke="#6c6c6c" stroke-opacity="0.05" stroke-width="1.2"/>
<line x1="1063.1" y1="125.0" x2="1145.3" y2="181.0" stroke="#6c6c6c" stroke-opacity="0.13" stroke-width="1.2"/>
<line x1="1145.3" y1="181.0" x2="1278.4" y2="271.8" stroke="#6c6c6c" stroke-opacity="0.23" stroke-width="1.2"/>
<line x1="1278.4" y1="271.8" x2="1530.9" y2="444.0" stroke="#6c6c6c" stroke-opacity="0.33" stroke-width="1.2"/>
<line x1="1530.9" y1="444.0" x2="2194.7" y2="896.7" stroke="#6c6c6c" stroke-opacity="0.41" stroke-width="1.2"/>
<line x1="1041.4" y1="87.0" x2="1103.7" y2="125.0" stroke="#6c6c6c" stroke-opacity="0.04" stroke-width="1.2"/>
<line x1="1103.7" y1="125.0" x2="1195.5" y2="181.1" stroke="#6c6c6c" stroke-opacity="0.13" stroke-width="1.2"/>
<line x1="1195.5" y1="181.1" x2="1344.1" y2="271.8" stroke="#6c6c6c" stroke-opacity="0.22" stroke-width="1.2"/>
<line x1="1344.1" y1="271.8" x2="1626.2" y2="444.1" stroke="#6c6c6c" stroke-opacity="0.32" stroke-width="1.2"/>
<line x1="1626.2" y1="444.1" x2="2367.6" y2="896.9" stroke="#6c6c6c" stroke-opacity="0.40" stroke-width="1.2"/>
<line x1="1075.4" y1="87.0" x2="1144.2" y2="125.0" stroke="#6c6c6c" stroke-opacity="0.04" stroke-width="1.2"/>
<line x1="1144.2" y1="125.0" x2="1245.5" y2="181.1" stroke="#6c6c6c" stroke-opacity="0.12" stroke-width="1.2"/>
<line x1="1245.5" y1="181.1" x2="1409.7" y2="271.9" stroke="#6c6c6c" stroke-opacity="0.21" stroke-width="1.2"/>
<line x1="1409.7" y1="271.9" x2="1721.2" y2="444.2" stroke="#6c6c6c" stroke-opacity="0.31" stroke-width="1.2"/>
<line x1="1109.3" y1="87.0" x2="1184.6" y2="125.0" stroke="#6c6c6c" stroke-opacity="0.04" stroke-width="1.2"/>
<line x1="1184.6" y1="125.0" x2="1295.5" y2="181.1" stroke="#6c6c6c" stroke-opacity="0.12" stroke-width="1.2"/>
<line x1="1295.5" y1="181.1" x2="1475.1" y2="271.9" stroke="#6c6c6c" stroke-opacity="0.21" stroke-width="1.2"/>
<line x1="1475.1" y1="271.9" x2="1816.1" y2="444.2" stroke="#6c6c6c" stroke-opacity="0.29" stroke-width="1.2"/>
<line x1="1143.1" y1="87.0" x2="1224.9" y2="125.1" stroke="#6c6c6c" stroke-opacity="0.03" stroke-width="1.2"/>
<line x1="1224.9" y1="125.1" x2="1345.3" y2="181.1" stroke="#6c6c6c" stroke-opacity="0.11" stroke-width="1.2"/>
<line x1="1345.3" y1="181.1" x2="1540.5" y2="271.9" stroke="#6c6c6c" stroke-opacity="0.20" stroke-width="1.2"/>
<line x1="1540.5" y1="271.9" x2="1910.7" y2="444.3" stroke="#6c6c6c" stroke-opacity="0.28" stroke-width="1.2"/>
<line x1="1176.9" y1="87.0" x2="1265.1" y2="125.1" stroke="#6c6c6c" stroke-opacity="0.03" stroke-width="1.2"/>
<line x1="1265.1" y1="125.1" x2="1395.1" y2="181.1" stroke="#6c6c6c" stroke-opacity="0.10" stroke-width="1.2"/>
<line x1="1395.1" y1="181.1" x2="1605.7" y2="272.0" stroke="#6c6c6c" stroke-opacity="0.19" stroke-width="1.2"/>
<line x1="1605.7" y1="272.0" x2="2005.3" y2="444.3" stroke="#6c6c6c" stroke-opacity="0.27" stroke-width="1.2"/>
<line x1="1210.6" y1="87.0" x2="1305.3" y2="125.1" stroke="#6c6c6c" stroke-opacity="0.02" stroke-width="1.2"/>
<line x1="1305.3" y1="125.1" x2="1444.8" y2="181.2" stroke="#6c6c6c" stroke-opacity="0.10" stroke-width="1.2"/>
<line x1="1444.8" y1="181.2" x2="1670.7" y2="272.0" stroke="#6c6c6c" stroke-opacity="0.18" stroke-width="1.2"/>
<line x1="1345.4" y1="125.1" x2="1494.3" y2="181.2" stroke="#6c6c6c" stroke-opacity="0.09" stroke-width="1.2"/>
<line x1="1494.3" y1="181.2" x2="1735.7" y2="272.0" stroke="#6c6c6c" stroke-opacity="0.17" stroke-width="1.2"/>
<line x1="1385.4" y1="125.1" x2="1543.8" y2="181.2" stroke="#6c6c6c" stroke-opacity="0.08" stroke-width="1.2"/>
<line x1="1543.8" y1="181.2" x2="1800.5" y2="272.1" stroke="#6c6c6c" stroke-opacity="0.16" stroke-width="1.2"/>
<line x1="1425.3" y1="125.1" x2="1593.2" y2="181.2" stroke="#6c6c6c" stroke-opacity="0.07" stroke-width="1.2"/>
<line x1="1593.2" y1="181.2" x2="1865.2" y2="272.1" stroke="#6c6c6c" stroke-opacity="0.15" stroke-width="1.2"/>
<line x1="1465.1" y1="125.1" x2="1642.5" y2="181.2" stroke="#6c6c6c" stroke-opacity="0.06" stroke-width="1.2"/>
<line x1="1504.9" y1="125.1" x2="1691.7" y2="181.3" stroke="#6c6c6c" stroke-opacity="0.06" stroke-width="1.2"/>
<line x1="1544.6" y1="125.2" x2="1740.8" y2="181.3" stroke="#6c6c6c" stroke-opacity="0.05" stroke-width="1.2"/>
<line x1="1584.2" y1="125.2" x2="1789.8" y2="181.3" stroke="#6c6c6c" stroke-opacity="0.04" stroke-width="1.2"/>
<line x1="1623.7" y1="125.2" x2="1838.7" y2="181.3" stroke="#6c6c6c" stroke-opacity="0.03" stroke-width="1.2"/>
<line x1="741.9" y1="-10.7" x2="2109.6" y2="5275.0" stroke="#9b3a47" stroke-width="1.1"/>
<line x1="-10120.3" y1="884.7" x2="5684.4" y2="381.7" stroke="#5f8a2b" stroke-width="1.1"/>
<defs><linearGradient id="gt" x1="0" y1="1" x2="1" y2="0"><stop offset="0" stop-color="#8b8d8d"/><stop offset="1" stop-color="#979999"/></linearGradient><linearGradient id="gf" x1="0" y1="0" x2="0.3" y2="1"><stop offset="0" stop-color="#7e8080"/><stop offset="1" stop-color="#858787"/></linearGradient></defs>
<polygon points="775.2,494.3 764.9,389.1 767.4,571.1 777.2,699.6" fill="#767878" stroke="#1c1c1c" stroke-width="0.8" stroke-linejoin="round"/>
<polygon points="775.2,494.3 1033.7,486.7 979.2,384.1 764.9,389.1" fill="url(#gt)" stroke="#1c1c1c" stroke-width="0.8" stroke-linejoin="round"/>
<polygon points="775.2,494.3 1033.7,486.7 1009.3,690.1 777.2,699.6" fill="url(#gf)" stroke="#1c1c1c" stroke-width="0.8" stroke-linejoin="round"/>
<line x1="777.500" y1="681" x2="1010" y2="672" stroke="#8e9090" stroke-width="1" stroke-opacity=".6"/>
<circle cx="775.2" cy="494.3" r="1.400" fill="#000"/>
<circle cx="1033.7" cy="486.7" r="1.400" fill="#000"/>
<circle cx="979.2" cy="384.1" r="1.400" fill="#000"/>
<circle cx="764.9" cy="389.1" r="1.400" fill="#000"/>
<circle cx="1009.3" cy="690.1" r="1.400" fill="#000"/>
<circle cx="777.2" cy="699.6" r="1.400" fill="#000"/>
<circle cx="767.4" cy="571.1" r="1.400" fill="#000"/>
<line x1="899.4" y1="598.2" x2="1045.8" y2="1163.9" stroke="#b04a58" stroke-width="1.1"/>
</svg>
</div>
<div id="outl"></div>
<div id="props"></div>
<div id="tl"></div>
<div id="status"></div>
<div class="abs" style="left:0;top:55px;width:1585px;height:28px;background:#383838;border-radius:0 5px 0 0"></div>
<div class="abs" style="left:0;top:83px;width:120px;height:27px;background:#383838;border-radius:0 0 5px 0"></div>
<div class="abs" style="left:1387px;top:83px;width:198px;height:27px;background:#383838;border-radius:0 0 0 5px"></div>
<div class="b" style="left:11px;top:59px;width:31px"></div><svg style="left:32px;top:67px" width="8" height="5" viewBox="0 0 8 5"><path d="M0.700 0.700L4 4l3.300-3.300" fill="none" stroke="#e0e0e0" stroke-width="1.300"/></svg><svg style="left:14px;top:61px" width="17" height="16" viewBox="0 0 17 16" fill="none" stroke="#e6e6e6" stroke-width="1.200"><path d="M3 8h11M1.500 12h12M6 6l-2.500 9M11 9l1.500 6"/><circle cx="11" cy="4.500" r="3.200" fill="#e6e6e6" stroke="none"/><circle cx="10" cy="3.500" r="1.100" fill="#2a2a2a" stroke="none"/></svg>
<div class="b" style="left:50px;top:59px;width:103px"></div><div class="x" style="left:78px;top:59.500px">Edit Mode</div><svg style="left:143px;top:67px" width="8" height="5" viewBox="0 0 8 5"><path d="M0.700 0.700L4 4l3.300-3.300" fill="none" stroke="#e0e0e0" stroke-width="1.300"/></svg><svg style="left:54px;top:61px" width="16" height="16" viewBox="0 0 16 16" fill="none" stroke="#e6e6e6" stroke-width="1.100"><path d="M3 4.500v8M4.500 13.500h7M13 12v-5M4.500 3h5"/><rect x="1.500" y="1.500" width="3" height="3" rx="1"/><rect x="1.500" y="12" width="3" height="3" rx="1"/><rect x="11.500" y="12" width="3" height="3" rx="1"/><rect x="10.500" y="1" width="4.500" height="4.500" fill="#e6e6e6" stroke="none"/></svg>
<div class="b a" style="left:161px;top:59px;width:21px;border-radius:4px 0 0 4px"></div><div class="b l" style="left:182.500px;top:59px;width:21px;border-radius:0"></div><div class="b l" style="left:204px;top:59px;width:21px;border-radius:0 4px 4px 0"></div><svg style="left:163px;top:61px" width="17" height="16" viewBox="0 0 17 16" fill="none" stroke="#e6e6e6" stroke-width="1.200"><path d="M2.500 5v-2.500h13v8c0 2-1.500 3.500-3.500 3.500h-9.500v-3.500"/><rect x="0.500" y="5.500" width="4.500" height="4.500" fill="#e6e6e6" stroke="none"/></svg><svg style="left:185px;top:61px" width="17" height="16" viewBox="0 0 17 16" fill="none" stroke="#b5b5b5" stroke-width="1.200"><path d="M2 14v-8c0-2 1.500-3.500 3.500-3.500h6c2 0 3.500 1.500 3.500 3.500v8"/><rect x="7" y="4" width="3" height="11" fill="#e6e6e6" stroke="none"/></svg><svg style="left:206px;top:61px" width="17" height="16" viewBox="0 0 17 16" fill="none" stroke="#b5b5b5" stroke-width="1.200"><path d="M5 4v-2h8c1.500 0 2.500 1 2.500 2.500v7.500h-2.500"/><rect x="1.500" y="5" width="10" height="10" fill="#e6e6e6" stroke="none"/></svg>
<div class="x" style="left:239px;top:59.500px">View</div><div class="x" style="left:284px;top:59.500px">Select</div><div class="x" style="left:338px;top:59.500px">Add</div><div class="x" style="left:377px;top:59.500px">Mesh</div><div class="x" style="left:427px;top:59.500px">Vertex</div><div class="x" style="left:481px;top:59.500px">Edge</div><div class="x" style="left:528px;top:59.500px">Face</div><div class="x" style="left:573px;top:59.500px">UV</div>
<div class="b" style="left:659px;top:59px;width:83px"></div><div class="x" style="left:687px;top:59.500px">Global</div><svg style="left:732px;top:67px" width="8" height="5" viewBox="0 0 8 5"><path d="M0.700 0.700L4 4l3.300-3.300" fill="none" stroke="#e0e0e0" stroke-width="1.300"/></svg><svg style="left:663px;top:61px" width="17" height="16" viewBox="0 0 17 16" fill="none" stroke="#e6e6e6" stroke-width="1.200"><path d="M3 13v-11M0.500 4.500l2.500-3 2.500 3M3 13h11M11.500 10.500l3 2.500-3 2.500M3 13l7-7M7 5.500l3.500 0 0 3.500"/><circle cx="3" cy="13" r="1.500" fill="#2a2a2a"/></svg>
<div class="b" style="left:750px;top:59px;width:32px"></div><svg style="left:772px;top:67px" width="8" height="5" viewBox="0 0 8 5"><path d="M0.700 0.700L4 4l3.300-3.300" fill="none" stroke="#e0e0e0" stroke-width="1.300"/></svg><svg style="left:753px;top:61px" width="17" height="16" viewBox="0 0 17 16" fill="none" stroke="#e6e6e6" stroke-width="1.300"><circle cx="5.500" cy="10.500" r="4"/><circle cx="10.500" cy="5.500" r="4"/><circle cx="8" cy="8" r="1.300" fill="#e6e6e6" stroke="none"/></svg>
<div class="b l" style="left:789px;top:59px;width:20.500px;border-radius:4px 0 0 4px"></div><div class="b" style="left:810px;top:59px;width:33px;border-radius:0 4px 4px 0"></div><svg style="left:833px;top:67px" width="8" height="5" viewBox="0 0 8 5"><path d="M0.700 0.700L4 4l3.300-3.300" fill="none" stroke="#e0e0e0" stroke-width="1.300"/></svg><svg style="left:791px;top:61px" width="17" height="16" viewBox="0 0 17 16" fill="none" stroke="#b0b0b0" stroke-width="1.600"><path d="M2.500 6.500l3-3.500c3-3 9.500 0 7 5l-4.500 6.500M5.500 9l2.500-3c1.500-1.500 3.500 0 2.500 1.500l-4 5.500"/></svg><svg style="left:812px;top:61px" width="17" height="16" viewBox="0 0 17 16" fill="none" stroke="#e6e6e6" stroke-width="1.200"><path d="M1 11.500h14M1.500 8.500v6M5.500 9.500v4M9.500 9.500v4M14.500 6v8.500"/><rect x="12" y="1" width="4.500" height="4.500" fill="#e6e6e6" stroke="none"/></svg>
<div class="b l" style="left:850px;top:59px;width:21px;background:#4c4c4c"></div><div class="b" style="left:873px;top:59px;width:32px;background:#2f2f2f"></div><svg style="left:896px;top:67px" width="8" height="5" viewBox="0 0 8 5"><path d="M0.700 0.700L4 4l3.300-3.300" fill="none" stroke="#5a5a5a" stroke-width="1.300"/></svg><svg style="left:852.500px;top:61px" width="16" height="16" viewBox="0 0 16 16" fill="none" stroke="#8a8a8a" stroke-width="1.200"><circle cx="8" cy="8" r="6"/><circle cx="8" cy="8" r="2" fill="#d0d0d0" stroke="none"/></svg><svg style="left:876px;top:61px" width="17" height="16" viewBox="0 0 17 16" fill="none" stroke="#9a9a9a" stroke-width="1.300"><path d="M1 14.500c4 0 4.500-12.500 7.500-12.500s3.500 12.500 7.500 12.500"/></svg>
<div class="b" style="left:1274.500px;top:59px;width:31px"></div><svg style="left:1296px;top:67px" width="8" height="5" viewBox="0 0 8 5"><path d="M0.700 0.700L4 4l3.300-3.300" fill="none" stroke="#e0e0e0" stroke-width="1.300"/></svg><svg style="left:1276px;top:60px" width="18" height="18" viewBox="0 0 18 18"><path d="M4 6.500c2-3.500 9-3.500 11 0c-2 3.500-9 3.500-11 0z" fill="#e6e6e6"/><circle cx="9.500" cy="6.500" r="2" fill="#2a2a2a"/><circle cx="9.500" cy="6.500" r="0.900" fill="#e6e6e6"/><path d="M1 8.500l8 3.500-3.500 1-1.500 4z" fill="#e6e6e6"/></svg>
<div class="b a" style="left:1313px;top:59px;width:20.500px;border-radius:4px 0 0 4px"></div><div class="b" style="left:1334px;top:59px;width:20.500px;border-radius:0 4px 4px 0"></div><svg style="left:1340px;top:67px" width="8" height="5" viewBox="0 0 8 5"><path d="M0.700 0.700L4 4l3.300-3.300" fill="none" stroke="#e0e0e0" stroke-width="1.300"/></svg><svg style="left:1315px;top:61px" width="17" height="16" viewBox="0 0 17 16" fill="none" stroke="#e6e6e6" stroke-width="1.300"><path d="M4.500 13l9.500-10.500M9.500 2h5v5M1 6.500c5-1.500 10 2 11 8.500"/><circle cx="3.500" cy="14" r="1.700"/></svg>
<div class="b a" style="left:1362px;top:59px;width:20.500px;border-radius:4px 0 0 4px"></div><div class="b" style="left:1383px;top:59px;width:20px;border-radius:0"></div><svg style="left:1389px;top:67px" width="8" height="5" viewBox="0 0 8 5"><path d="M0.700 0.700L4 4l3.300-3.300" fill="none" stroke="#e0e0e0" stroke-width="1.300"/></svg><svg style="left:1364px;top:61px" width="17" height="16" viewBox="0 0 17 16" fill="none" stroke="#e6e6e6" stroke-width="1.300"><circle cx="10" cy="6.500" r="5.500" fill="#e6e6e6" stroke="none"/><path d="M10 6.500l-3-3M10 6.500l4 2" stroke="#4772b3" stroke-width="1.200"/><circle cx="7" cy="10" r="4.800"/><path d="M2.200 10a4.800 4.800 0 0 0 9.600 0" /></svg>
<div class="b" style="left:1404px;top:59px;width:33px;border-radius:0 4px 4px 0"></div><svg style="left:1427px;top:67px" width="8" height="5" viewBox="0 0 8 5"><path d="M0.700 0.700L4 4l3.300-3.300" fill="none" stroke="#e0e0e0" stroke-width="1.300"/></svg><svg style="left:1407px;top:61px" width="16" height="16" viewBox="0 0 16 16" fill="none" stroke="#e6e6e6" stroke-width="1.100"><path d="M3 4.500v8M4.500 13.500h7M13 12v-5M4.500 3h5"/><rect x="1.500" y="1.500" width="3" height="3" rx="1"/><rect x="1.500" y="12" width="3" height="3" rx="1"/><rect x="11.500" y="12" width="3" height="3" rx="1"/><rect x="10.500" y="1" width="4.500" height="4.500" fill="#e6e6e6" stroke="none"/></svg>
<div class="b l" style="left:1445.500px;top:59px;width:20px"></div><svg style="left:1447.500px;top:61px" width="16" height="16" viewBox="0 0 16 16" fill="none" stroke="#d8d8d8" stroke-width="1.200"><path d="M5 4v-2.500h9.500v9.500h-2.500"/><rect x="1.500" y="4.500" width="10" height="10"/><path d="M5 8.500h1M8 11h1" /></svg>
<div class="b l" style="left:1472px;top:59px;width:20.500px;border-radius:4px 0 0 4px"></div><div class="b a" style="left:1493px;top:59px;width:20.500px;border-radius:0"></div><div class="b l" style="left:1514px;top:59px;width:20.500px;border-radius:0"></div><div class="b l" style="left:1535px;top:59px;width:20.500px;border-radius:0"></div><div class="b" style="left:1556px;top:59px;width:20.500px;border-radius:0 4px 4px 0"></div><svg style="left:1562px;top:67px" width="8" height="5" viewBox="0 0 8 5"><path d="M0.700 0.700L4 4l3.300-3.300" fill="none" stroke="#e0e0e0" stroke-width="1.300"/></svg><svg style="left:1474.500px;top:61px" width="16" height="16" viewBox="0 0 16 16" fill="none" stroke="#d8d8d8" stroke-width="1.100"><circle cx="8" cy="8" r="6.500"/><ellipse cx="8" cy="8" rx="3" ry="6.500"/><path d="M1.500 8h13M8 1.500v13"/></svg><svg style="left:1495px;top:61px" width="16" height="16" viewBox="0 0 16 16"><circle cx="8" cy="8" r="7" fill="#fff"/></svg><svg style="left:1516px;top:61px" width="16" height="16" viewBox="0 0 16 16"><circle cx="8" cy="8" r="6.500" fill="none" stroke="#d8d8d8" stroke-width="1.100"/><path d="M8 1.500a6.500 6.500 0 0 0 0 13a6.500 6.500 0 0 0 4.600-1.900L8 8z" fill="#d8d8d8"/></svg><svg style="left:1537px;top:61px" width="16" height="16" viewBox="0 0 16 16" fill="none" stroke="#d8d8d8" stroke-width="1.100"><circle cx="8" cy="8" r="6.500"/><path d="M4 6a4.500 4.500 0 0 1 3-3" /><path d="M13 9a5 5 0 0 1-4 4" stroke-dasharray="1.200 1"/></svg>
<svg style="left:1397px;top:88px" width="17" height="18" viewBox="0 0 17 18" fill="none" stroke="#c8c8c8" stroke-width="1.100"><path d="M8.500 0v18" stroke-dasharray="2 1.500"/><path d="M6.500 4c-2.500-3-6-2-5 1 .5 1.500 2 2 2 3s-2 1.500-2 3.500c0 2.500 3.500 3 5 .5M10.500 4c2.500-3 6-2 5 1-.5 1.500-2 2-2 3s2 1.500 2 3.500c0 2.500-3.500 3-5 .5"/></svg><div class="b" style="left:1417px;top:87.500px;width:19px;background:#4b4b4b;border-radius:4px 0 0 4px"></div><div class="b" style="left:1436.500px;top:87.500px;width:18.500px;background:#4b4b4b;border-radius:0"></div><div class="b" style="left:1455.500px;top:87.500px;width:16.500px;background:#4b4b4b;border-radius:0 4px 4px 0"></div><div class="x" style="left:1422px;top:87.500px">X</div><div class="x" style="left:1440.500px;top:87.500px">Y</div><div class="x" style="left:1459px;top:87.500px">Z</div><div class="b" style="left:1478px;top:87.500px;width:20.500px;background:#4b4b4b"></div><svg style="left:1480px;top:89.500px" width="16" height="16" viewBox="0 0 16 16" fill="none" stroke="#8a8a8a" stroke-width="1.200"><rect x="11" y="1.500" width="3.500" height="3.500"/><rect x="1.500" y="11" width="3.500" height="3.500"/><path d="M3 8.500a6 6 0 0 1 5.500-5.500M13 7.500a6 6 0 0 1-5.500 5.500" stroke-dasharray="2 1.500"/></svg><div class="b" style="left:1506px;top:87.500px;width:71px"></div><div class="x" style="left:1514px;top:87.500px">Options</div><svg style="left:1566.5px;top:95.5px" width="8" height="5" viewBox="0 0 8 5"><path d="M0.700 0.700L4 4l3.300-3.300" fill="none" stroke="#e0e0e0" stroke-width="1.300"/></svg>
<div class="b a" style="left:9px;top:87.500px;width:20.500px;border-radius:4px 0 0 4px"></div><div class="b l" style="left:30px;top:87.500px;width:20.500px;border-radius:0;background:#505050"></div><div class="b l" style="left:51px;top:87.500px;width:20.500px;border-radius:0;background:#505050"></div><div class="b l" style="left:72px;top:87.500px;width:20.500px;border-radius:0;background:#505050"></div><div class="b l" style="left:93px;top:87.500px;width:20.500px;border-radius:0 4px 4px 0;background:#505050"></div><svg style="left:11.500px;top:90px" width="15" height="15" viewBox="0 0 15 15"><rect x="1" y="1" width="13" height="13" fill="none" stroke="#fff" stroke-width="1.600" stroke-dasharray="2 1.700"/></svg><svg style="left:32.500px;top:90px" width="15" height="15" viewBox="0 0 15 15"><path d="M5.500 0.500h9v9h-5v5h-9v-9h5z" fill="#d0d0d0"/></svg><svg style="left:53.500px;top:90px" width="15" height="15" viewBox="0 0 15 15"><path d="M5.500 0.500h9v9h-5v-4h-4z" fill="#d0d0d0"/><path d="M5 6h-4v8h8v-4" fill="none" stroke="#d0d0d0" stroke-width="1.300" stroke-dasharray="2 1.500"/></svg><svg style="left:74.500px;top:90px" width="15" height="15" viewBox="0 0 15 15"><path d="M5.500 0.500h9v9h-5v5h-9v-9h5z" fill="#d0d0d0"/><rect x="5.500" y="5.500" width="4" height="4" fill="#505050"/></svg><svg style="left:95.500px;top:90px" width="15" height="15" viewBox="0 0 15 15"><rect x="1" y="1" width="13" height="13" fill="none" stroke="#d0d0d0" stroke-width="1.300" stroke-dasharray="2 1.700"/><rect x="4.500" y="4.500" width="6" height="6" fill="#d0d0d0"/></svg>
<div class="abs" style="left:0;top:110px;width:2px;height:828px;background:#2c2c2c"></div><div class="abs" style="left:10px;top:121.2px;width:43px;height:36.4px;background:#4772b3;border-radius:5px 5px 0 0"></div><svg style="left:47px;top:150.6px" width="5" height="5" viewBox="0 0 5 5"><path d="M5 0v5h-5z" fill="#9bb4dc"/></svg><div class="abs" style="left:10px;top:158.6px;width:43px;height:36.4px;background:#2b2b2b;border-radius:0 0 5px 5px"></div><svg style="left:15.599999999999998px;top:124.0px" width="30.800000000000004" height="30.800000000000004" viewBox="0 0 28 28"><rect x="2.500" y="2.500" width="23" height="23" rx="2" fill="none" stroke="#f0c040" stroke-width="1.800" stroke-dasharray="4.500 2.500"/><path d="M10 7l10 9-5 .5-3 4.500z" fill="#fff"/></svg>
<svg style="left:15.599999999999998px;top:161.4px" width="30.800000000000004" height="30.800000000000004" viewBox="0 0 28 28"><circle cx="14" cy="14" r="11" fill="none" stroke="#fff" stroke-width="1.800"/><circle cx="14" cy="14" r="11" fill="none" stroke="#c43b55" stroke-width="1.800" stroke-dasharray="4.300 4.340"/><path d="M14 5v6M14 17v6M5 14h6M17 14h6" stroke="#d8d8d8" stroke-width="1.300"/></svg>
<div class="abs" style="left:10px;top:201.3px;width:43px;height:36.4px;background:#2b2b2b;border-radius:5px 5px 0 0"></div><div class="abs" style="left:10px;top:238.7px;width:43px;height:36.4px;background:#2b2b2b;border-radius:0"></div><div class="abs" style="left:10px;top:276.1px;width:43px;height:36.4px;background:#2b2b2b;border-radius:0"></div><svg style="left:47px;top:305.5px" width="5" height="5" viewBox="0 0 5 5"><path d="M5 0v5h-5z" fill="#6a6a6a"/></svg><div class="abs" style="left:10px;top:313.5px;width:43px;height:36.4px;background:#2b2b2b;border-radius:0 0 5px 5px"></div><svg style="left:17.0px;top:205.5px" width="28.0" height="28.0" viewBox="0 0 28 28"><path d="M14 4v20M4 14h20" stroke="#e6e6e6" stroke-width="1.500" stroke-dasharray="2.500 1.800"/><path d="M14 1l3.500 5h-7zM14 27l3.500-5h-7zM1 14l5-3.500v7zM27 14l-5-3.500v7z" fill="#e6e6e6"/><rect x="12" y="12" width="4" height="4" fill="#2b2b2b"/></svg>
<svg style="left:17.0px;top:242.9px" width="28.0" height="28.0" viewBox="0 0 28 28"><path d="M5 10a10 10 0 0 1 18 0M23 18a10 10 0 0 1-18 0" fill="none" stroke="#e6e6e6" stroke-width="1.500"/><path d="M1.500 15l3.500 5 3.500-5zM19.500 13l3.500-5 3.500 5z" fill="#e6e6e6"/><path d="M14 9.500l4.500 4.500-4.500 4.500-4.500-4.500z" fill="#c8c8c8"/></svg>
<svg style="left:17.0px;top:280.3px" width="28.0" height="28.0" viewBox="0 0 28 28"><path d="M6 12v-8h18v18h-8" fill="none" stroke="#e6e6e6" stroke-width="1.400"/><rect x="4" y="13" width="11" height="11" fill="#e6e6e6"/><path d="M15 13l6-6M17 6.500h4.500v4.500" fill="none" stroke="#e6e6e6" stroke-width="1.500"/></svg>
<svg style="left:17.0px;top:317.7px" width="28.0" height="28.0" viewBox="0 0 28 28"><circle cx="14" cy="14" r="11" fill="none" stroke="#e6e6e6" stroke-width="1.400" stroke-dasharray="9 8.280" stroke-dashoffset="-4"/><rect x="9.500" y="9.500" width="9" height="9" fill="#e6e6e6"/><path d="M14 1.500l3 4h-6zM14 26.500l3-4h-6zM1.500 14l4-3v6zM26.500 14l-4-3v6z" fill="#e6e6e6"/></svg>
<div class="abs" style="left:10px;top:356.2px;width:43px;height:36.4px;background:#2b2b2b;border-radius:5px 5px 0 0"></div><svg style="left:47px;top:385.59999999999997px" width="5" height="5" viewBox="0 0 5 5"><path d="M5 0v5h-5z" fill="#6a6a6a"/></svg><div class="abs" style="left:10px;top:393.59999999999997px;width:43px;height:36.4px;background:#2b2b2b;border-radius:0 0 5px 5px"></div><svg style="left:15px;top:358.40px" width="32" height="32" viewBox="0 0 32 32"><path d="M3.700 22.800l1.800-5.200 12-12 3.500 3.500-12 12z" fill="#e6e6e6"/><path d="M18.600 4.500l1.300-1.300a1.200 1.200 0 0 1 1.700 0l1.800 1.800a1.200 1.200 0 0 1 0 1.700l-1.300 1.300z" fill="#e6e6e6"/><path d="M5.300 23.700c2.500 2.500 5 2.500 8 0s6-5.500 10-4 6 4 8 5" fill="none" stroke="#8fd3b0" stroke-width="1.500"/></svg>
<svg style="left:15px;top:395.80px" width="32" height="32" viewBox="0 0 32 32"><path d="M11 25v-13a13 13 0 0 1 13 13z" fill="#8fd3b0"/><path d="M12.500 9a16 16 0 0 1 14.500 14" fill="none" stroke="#8fd3b0" stroke-width="1.300"/><rect x="6.300" y="3.300" width="4.700" height="25.800" fill="#e6e6e6"/><rect x="6.300" y="25.100" width="23.700" height="4" fill="#e6e6e6"/><path d="M8.500 5.0h2.500M8.500 7.5h2.500M8.500 10.0h2.500M8.500 12.5h2.500M8.500 15.0h2.500M8.500 17.5h2.500M8.500 20.0h2.500M8.500 22.5h2.500M13.0 27v2M15.5 27v2M18.0 27v2M20.5 27v2M23.0 27v2M25.5 27v2M28.0 27v2" stroke="#2b2b2b" stroke-width=".7"/></svg>
<div class="abs" style="left:10px;top:436.3px;width:43px;height:36.4px;background:#2b2b2b;border-radius:5px 5px 0 0"></div><svg style="left:47px;top:465.7px" width="5" height="5" viewBox="0 0 5 5"><path d="M5 0v5h-5z" fill="#6a6a6a"/></svg><div class="abs" style="left:10px;top:473.7px;width:43px;height:36.4px;background:#2b2b2b;border-radius:0 0 5px 5px"></div><svg style="left:47px;top:503.09999999999997px" width="5" height="5" viewBox="0 0 5 5"><path d="M5 0v5h-5z" fill="#6a6a6a"/></svg><svg style="left:15px;top:438.50px" width="32" height="32" viewBox="0 0 32 32"><path d="M8.300 13.400h15.200v15.200h-15.200zM8.300 13.400l6.100-5.500h15.200l-6.100 5.500M29.600 7.900v15.200l-6.100 5.500" fill="none" stroke="#8fd3b0" stroke-width="1.300" stroke-linejoin="round"/><path d="M6.700 2.600v7.400M3 6.300h7.400" stroke="#8fd3b0" stroke-width="2"/></svg>
<svg style="left:15px;top:475.90px" width="32" height="32" viewBox="0 0 32 32"><path d="M9 21.500v6.500h15.500v-6.500M24.500 28l4-3.500v-15h-3.500" fill="none" stroke="#8fd3b0" stroke-width="1.300" stroke-linejoin="round"/><path d="M27 7.500l3 2-3 2z" fill="#8fd3b0"/><path d="M14 4.600h8.500v16.200h-17.200v-8" fill="none" stroke="#e88f8f" stroke-width="1.500"/><circle cx="5.300" cy="9.300" r="2.600" fill="none" stroke="#e6e6e6" stroke-width="1.500"/><circle cx="11" cy="3.800" r="2.600" fill="none" stroke="#e6e6e6" stroke-width="1.500"/><path d="M7.500 10l13.600 1.700-8.800-1zM12 6l-.6 12.800 1.500-8z" fill="#e6e6e6" stroke="#e6e6e6" stroke-width="1.200" stroke-linejoin="round"/></svg>
<div class="abs" style="left:10px;top:516.4px;width:43px;height:36.4px;background:#2b2b2b;border-radius:5px 5px 0 0"></div><svg style="left:47px;top:545.8px" width="5" height="5" viewBox="0 0 5 5"><path d="M5 0v5h-5z" fill="#6a6a6a"/></svg><div class="abs" style="left:10px;top:553.8px;width:43px;height:36.4px;background:#2b2b2b;border-radius:0"></div><div class="abs" style="left:10px;top:591.1999999999999px;width:43px;height:36.4px;background:#2b2b2b;border-radius:0"></div><div class="abs" style="left:10px;top:628.5999999999999px;width:43px;height:36.4px;background:#2b2b2b;border-radius:0"></div><svg style="left:47px;top:657.9999999999999px" width="5" height="5" viewBox="0 0 5 5"><path d="M5 0v5h-5z" fill="#6a6a6a"/></svg><div class="abs" style="left:10px;top:666.0px;width:43px;height:36.4px;background:#2b2b2b;border-radius:0"></div><svg style="left:47px;top:695.4px" width="5" height="5" viewBox="0 0 5 5"><path d="M5 0v5h-5z" fill="#6a6a6a"/></svg><div class="abs" style="left:10px;top:703.4px;width:43px;height:36.4px;background:#2b2b2b;border-radius:0"></div><div class="abs" style="left:10px;top:740.8px;width:43px;height:36.4px;background:#2b2b2b;border-radius:0"></div><div class="abs" style="left:10px;top:778.2px;width:43px;height:36.4px;background:#2b2b2b;border-radius:0"></div><svg style="left:47px;top:807.6px" width="5" height="5" viewBox="0 0 5 5"><path d="M5 0v5h-5z" fill="#6a6a6a"/></svg><div class="abs" style="left:10px;top:815.5999999999999px;width:43px;height:36.4px;background:#2b2b2b;border-radius:0"></div><svg style="left:47px;top:844.9999999999999px" width="5" height="5" viewBox="0 0 5 5"><path d="M5 0v5h-5z" fill="#6a6a6a"/></svg><div class="abs" style="left:10px;top:853.0px;width:43px;height:36.4px;background:#2b2b2b;border-radius:0"></div><svg style="left:47px;top:882.4px" width="5" height="5" viewBox="0 0 5 5"><path d="M5 0v5h-5z" fill="#6a6a6a"/></svg><div class="abs" style="left:10px;top:890.4px;width:43px;height:36.4px;background:#2b2b2b;border-radius:0"></div><svg style="left:47px;top:919.8px" width="5" height="5" viewBox="0 0 5 5"><path d="M5 0v5h-5z" fill="#6a6a6a"/></svg><div class="abs" style="left:10px;top:927.8px;width:43px;height:10.200000000000045px;background:#2b2b2b;border-radius:0"></div><svg style="left:15px;top:518.60px" width="32" height="32" viewBox="0 0 32 32"><path d="M5.300 7l4.600-4.500h17.700v5l-4.600 4.500h-17.700z" fill="#8fd3b0"/><path d="M5.300 12.300h17.700v15.200h-17.700zM23 12.300l4.600-4.500v15.200l-4.600 4.500" fill="none" stroke="#e6e6e6" stroke-width="1.300" stroke-linejoin="round"/></svg>
<svg style="left:15px;top:556.00px" width="32" height="32" viewBox="0 0 32 32"><rect x="5.300" y="11.200" width="17.200" height="16.200" fill="#8fd3b0"/><rect x="11" y="16.300" width="6.500" height="6.500" fill="#1f1f1f"/><path d="M5.300 11.200l5.700 5.100M22.500 11.200l-5 5.100M5.300 27.400l5.700-4.600M22.500 27.400l-5-4.600" stroke="#2b2b2b" stroke-width="1.100"/><path d="M5.300 11.200h17.200v16.200h-17.200zM5.300 11.200l6.100-5.500h16.600l-5.500 5.500M28 5.700v16.600l-5.500 5.100" fill="none" stroke="#e6e6e6" stroke-width="1.300" stroke-linejoin="round"/></svg>
<svg style="left:15px;top:593.40px" width="32" height="32" viewBox="0 0 32 32"><path d="M5.300 15.600l5.100-8.100 12.100-1.400 4.700 6.500-3.700 3z" fill="#8fd3b0"/><path d="M5.300 15.600h18.200v11.800h-18.200zM23.500 15.600l3.700-3v11.400l-3.700 3.400M5.300 15.600l5.100-8.100 12.100-1.400 4.700 6.500" fill="none" stroke="#e6e6e6" stroke-width="1.300" stroke-linejoin="round"/></svg>
<svg style="left:15px;top:630.80px" width="32" height="32" viewBox="0 0 32 32"><path d="M5.300 11.400h17.600v15.800h-17.600zM5.300 11.400l5.100-4.900h17.600l-5.100 4.900M28 6.500v15.800l-5.100 4.900M12.400 27.200v-15.800l3-4.900" fill="none" stroke="#e6e6e6" stroke-width="1.300" stroke-linejoin="round"/><path d="M15 27.200v-15.800l2.800-4.900" fill="none" stroke="#8fd3b0" stroke-width="1.500"/></svg>
<svg style="left:15px;top:668.20px" width="32" height="32" viewBox="0 0 32 32"><path d="M5.300 12.300h18.200v15.900h-18.200zM5.300 12.300l5-5h18.200l-5 5M28.500 7.300v15.900l-5 5" fill="none" stroke="#e6e6e6" stroke-width="1.300" stroke-linejoin="round"/><path d="M18.500 6.300l-7.500 5.600 7.100 15.900" fill="none" stroke="#8fd3b0" stroke-width="1.500"/><circle cx="18.500" cy="6.300" r="1.900" fill="#8fd3b0"/><circle cx="11" cy="11.900" r="1.900" fill="#8fd3b0"/><circle cx="18.100" cy="27.800" r="1.900" fill="#8fd3b0"/></svg>
<svg style="left:15px;top:705.60px" width="32" height="32" viewBox="0 0 32 32"><path d="M14 6l12.200 4.700v16.800h-18.900l-.4-10.700z" fill="#8fd3b0"/><circle cx="14" cy="6" r="1.900" fill="#fff"/><circle cx="26.2" cy="10.7" r="1.900" fill="#fff"/><circle cx="26.2" cy="27.5" r="1.900" fill="#fff"/><circle cx="7.3" cy="27.5" r="1.900" fill="#fff"/><circle cx="6.9" cy="16.8" r="1.900" fill="#fff"/></svg>
<svg style="left:15px;top:743.00px" width="32" height="32" viewBox="0 0 32 32"><path d="M15.400 18.600L26.7 14.0A12.200 12.200 0 1 1 15.4 6.4Z" fill="#8fd3b0"/><path d="M15.400 18.600L26.5 23.8M15.400 18.600L19.6 30.1M15.400 18.600L10.2 29.7M15.400 18.600L3.9 22.8M15.400 18.600L4.3 13.4M15.400 18.600L11.2 7.1" stroke="#2b2b2b" stroke-width="1"/><path d="M15.9 17.6L12.3 3.0A15.0 15.0 0 0 1 18.5 2.8ZM15.9 17.6L25.5 6.1A15.0 15.0 0 0 1 30.0 12.5Z" fill="none" stroke="#e6e6e6" stroke-width="1.100" stroke-linejoin="round"/></svg>
<svg style="left:15px;top:780.40px" width="32" height="32" viewBox="0 0 32 32"><path d="M17 5.800c7 0 10.600 3.500 10.600 10.700s-3.600 10.600-10.600 10.600-10.700-3.500-10.700-10.600 3.600-10.700 10.700-10.700z" fill="#d6b8e8"/><path d="M6.500 14c7-1.500 14-1.500 21 0M6.800 21c7 1.500 13.500 1.500 20.500 0M15.500 6c-1.500 7-1.500 14 0 21M22 6.800c1.500 6.500 1.500 13 0 19.500" fill="none" stroke="#2b2b2b" stroke-width="1"/></svg>
<svg style="left:15px;top:817.80px" width="32" height="32" viewBox="0 0 32 32"><path d="M11 13.300h12.500v15.800h-12.500zM11 13.300l4.500-5h12.500l-4.500 5M28 8.300v15.800l-4.500 5" fill="none" stroke="#e6e6e6" stroke-width="1.300" stroke-linejoin="round"/><path d="M8 29h-2.700v-15.500l4.500-5h3M10 29h-2v-15.500l4.500-5" fill="none" stroke="#e6e6e6" stroke-width="1.100"/><path d="M2 5.200l4-2.500v5z" fill="#d6b8e8"/><path d="M5 5.200h3" stroke="#d6b8e8" stroke-width="1.300"/></svg>
<svg style="left:15px;top:855.20px" width="32" height="32" viewBox="0 0 32 32"><rect x="10.400" y="12.800" width="12" height="12" fill="none" stroke="#e6e6e6" stroke-width="1.300"/><path d="M10.400 12.800l12 12M22.400 12.800l-12 12" stroke="#e6e6e6" stroke-width="1.800"/><path d="M16.400 5.500l3.500 4.500h-7zM16.400 32l3.500-4.500h-7zM3 18.800l4.500-3.500v7zM29.800 18.800l-4.500-3.500v7z" fill="#e6e6e6"/><path d="M16.400 10v2.500M16.400 25v2.500M7.500 18.800h2.500M23 18.800h2.500" stroke="#e6e6e6" stroke-width="1.500"/></svg>
<svg style="left:15px;top:892.60px" width="32" height="32" viewBox="0 0 32 32"><path d="M1.500 13.900l15.800-5.300 14.300 14.800-1.600 3.100-14.500 3.800-14-13.800z" fill="#d6b8e8"/><path d="M1.500 13.900l13.800 13.900 16.300-4.400M15.300 27.800l.2 2.500" fill="none" stroke="#7d6a8c" stroke-width=".9"/><path d="M25.500 5.400l4-2.500v5z" fill="#d6b8e8"/><path d="M28.500 5.400h3" stroke="#d6b8e8" stroke-width="1.300"/></svg>
<svg style="left:19px;top:932px" width="24" height="6" viewBox="0 0 24 7"><path d="M5 7l4-5h12" fill="none" stroke="#e6e6e6" stroke-width="1.300"/></svg><div class="x" style="left:73px;top:120px;font-size:13px;color:#fff;-webkit-text-stroke:.15px #fff;text-shadow:0 1px 1px rgba(0,0,0,.5)">User Perspective</div><div class="x" style="left:73px;top:140px;font-size:13px;color:#fff;-webkit-text-stroke:.15px #fff;text-shadow:0 1px 1px rgba(0,0,0,.5)">(1) Cube</div>
<div class="abs" style="left:242px;top:124px;width:397px;height:746px;background:#000"></div>
<div class="abs" id="bt" style="left:255.200px;top:140.100px;width:380px;font-size:27.450px;line-height:32.170px;color:#fff;white-space:nowrap">1. You can toggle real-time<br>checking on or off. <b>Off by</b><br><b>default</b>.<br><br>2. Set a custom overlap<br>threshold distance.<br><br>3. If real-time checking is off,<br>you can manually check for<br>overlapping vertices any time.<br><br>4. Show overlapping vertices<br>to see what's overlapping<br>before merging. <b>Must switch</b><br><b>to <u>Vertex</u> mode to see the</b><br><b>overlapping vertices.</b><br><br>5. Merge vertices by threshold<br>amount.<br><br>6. Found under the <b>Edit</b> N-<br>Panel.</div>
<svg style="left:858px;top:510px" width="50" height="50" viewBox="858 510 50 50"><circle cx="882.800" cy="534.700" r="11" fill="none" stroke="#fff" stroke-width="1.300"/><circle cx="882.800" cy="534.700" r="11" fill="none" stroke="#e0404f" stroke-width="1.300" stroke-dasharray="4.300 4.340"/><path d="M882.800 515.500v13M882.800 541v13.500M861 534.700h15M890 534.700h15" stroke="#2a2a2a" stroke-width=".9"/><path d="M881.300 527.500l1.500 7.200 1.500-7.200M881.300 542l1.500-7.300 1.500 7.300" fill="none" stroke="#333" stroke-width=".7"/><circle cx="882.800" cy="534.900" r="1.500" fill="#ff9a2e"/></svg>
<svg style="left:1160px;top:120px" width="110" height="100" viewBox="1160 120 110 100">
<circle cx="1212.800" cy="150.500" r="7.800" fill="#f0314f" fill-opacity=".15" stroke="#c43a52" stroke-width="1.300"/>
<circle cx="1179" cy="168.700" r="8.500" fill="#5b7a28" stroke="#8bb12c" stroke-width="1.300"/>
<circle cx="1215.200" cy="200" r="8" fill="#2d85e8" fill-opacity=".25" stroke="#3f7fd0" stroke-width="1.300"/>
<path d="M1215.200 168V137" stroke="#2d85e8" stroke-width="2.200"/><path d="M1215.200 168L1251 167.200" stroke="#78b820" stroke-width="2.200"/><path d="M1215.200 168L1217 185" stroke="#f0314f" stroke-width="2.200"/>
<circle cx="1214.900" cy="136.600" r="9.200" fill="#2d85e8"/><circle cx="1250.900" cy="167.200" r="9.200" fill="#78b41c"/><circle cx="1216.900" cy="185.300" r="9.400" fill="#f0314f"/>
<text x="1214.900" y="141.300" font-family="Liberation Sans" font-size="12.500" font-weight="700" text-anchor="middle" fill="#0a0a0a">Z</text><text x="1250.900" y="171.900" font-family="Liberation Sans" font-size="12.500" font-weight="700" text-anchor="middle" fill="#0a0a0a">Y</text><text x="1216.900" y="190" font-family="Liberation Sans" font-size="12.500" font-weight="700" text-anchor="middle" fill="#0a0a0a">X</text>
</svg>
<div class="abs" style="left:1232.0px;top:214.5px;width:29px;height:29px;border-radius:50%;background:#2d2d2d"></div><div class="abs" style="left:1232.0px;top:248.0px;width:29px;height:29px;border-radius:50%;background:#2d2d2d"></div><div class="abs" style="left:1232.0px;top:281.8px;width:29px;height:29px;border-radius:50%;background:#2d2d2d"></div><div class="abs" style="left:1232.0px;top:315.5px;width:29px;height:29px;border-radius:50%;background:#2d2d2d"></div><svg style="left:1237px;top:219.500px" width="19" height="19" viewBox="0 0 19 19"><circle cx="11.500" cy="7.500" r="6.500" fill="#e6e6e6"/><path d="M7 12l-5.500 5.500" stroke="#e6e6e6" stroke-width="2.400" stroke-linecap="round"/><path d="M11.500 4v7M8 7.500h7" stroke="#2d2d2d" stroke-width="1.300"/></svg><svg style="left:1237px;top:253px" width="19" height="19" viewBox="0 0 19 19"><path d="M5.500 10c0-1 8.500-1 8.500 0v3.500c0 2.500-1.500 4.500-4.500 4.500s-4-2-4-4.500z" fill="#e6e6e6"/><path d="M6.300 10.500L5 4.300M8.700 10V2.300M11.200 10l.8-7.500M13.400 11l2-6.200M6 14.500L2.300 10.700" stroke="#e6e6e6" stroke-width="2.100" stroke-linecap="round" fill="none"/></svg><svg style="left:1236.500px;top:286.500px" width="20" height="20" viewBox="0 0 20 20" fill="none" stroke="#e6e6e6" stroke-width="1.400"><circle cx="6" cy="5.500" r="3"/><circle cx="13" cy="4.500" r="3.800"/><circle cx="13" cy="4.500" r="1" fill="#e6e6e6"/><rect x="4" y="11" width="9" height="6.500" rx="1"/><path d="M13.500 14l5-2.500v5.500z" fill="#e6e6e6" stroke="none"/><path d="M1 12.500h3" /></svg><svg style="left:1237px;top:321px" width="19" height="18" viewBox="0 0 19 18" fill="none" stroke="#e6e6e6" stroke-width="1.500"><path d="M5 1.500h9l4 15h-17z"/><path d="M8 1.500l-2 15M11 1.500l2 15M3.500 6.500h12M2.300 11.500h14.400"/></svg>
<div class="abs" style="left:1281px;top:110px;width:283px;height:233px;background:rgba(65,65,65,.78)"></div><svg style="left:1291px;top:122px" width="6" height="10" viewBox="0 0 6 10"><path d="M1 1l4 4-4 4" fill="none" stroke="#e6e6e6" stroke-width="1.300"/></svg><div class="x" style="left:1302.500px;top:117.500px">LoopTools</div><svg style="left:1536px;top:124px" width="12" height="5" viewBox="0 0 12 5"><g fill="#7a7a7a"><rect x="0" y="0" width="1.500" height="1.200"/><rect x="3" y="0" width="1.500" height="1.200"/><rect x="6" y="0" width="1.500" height="1.200"/><rect x="9" y="0" width="1.500" height="1.200"/><rect x="0" y="3" width="1.500" height="1.200"/><rect x="3" y="3" width="1.500" height="1.200"/><rect x="6" y="3" width="1.500" height="1.200"/><rect x="9" y="3" width="1.500" height="1.200"/></g></svg><svg style="left:1289px;top:153.500px" width="10" height="6" viewBox="0 0 10 6"><path d="M1 1l4 4 4-4" fill="none" stroke="#e6e6e6" stroke-width="1.300"/></svg><div class="x" style="left:1302.500px;top:146px">Vertex Overlap</div><svg style="left:1536px;top:152.5px" width="12" height="5" viewBox="0 0 12 5"><g fill="#7a7a7a"><rect x="0" y="0" width="1.500" height="1.200"/><rect x="3" y="0" width="1.500" height="1.200"/><rect x="6" y="0" width="1.500" height="1.200"/><rect x="9" y="0" width="1.500" height="1.200"/><rect x="0" y="3" width="1.500" height="1.200"/><rect x="3" y="3" width="1.500" height="1.200"/><rect x="6" y="3" width="1.500" height="1.200"/><rect x="9" y="3" width="1.500" height="1.200"/></g></svg><div class="abs" style="left:1289.500px;top:182px;width:14px;height:14px;border-radius:3px;background:#4772b3"></div><svg style="left:1291.500px;top:184.500px" width="10" height="9" viewBox="0 0 10 9"><path d="M1 4.500l3 3 5-6.500" fill="none" stroke="#fff" stroke-width="1.700"/></svg><div class="x" style="left:1307px;top:178.500px">Real-time Checking</div><div class="b l" style="left:1289.500px;top:205.500px;width:255.500px"></div><div class="x" style="left:1306.500px;top:205.500px">Overlap Threshold</div><div class="x" style="left:1429px;width:100px;text-align:right;top:205.500px">0.0001</div><div class="b l" style="left:1289.500px;top:232.5px;width:255.500px"></div><div class="x" style="left:1289.500px;width:255.500px;text-align:center;top:232.5px">Check Overlaps</div><div class="b l" style="left:1289.500px;top:259.5px;width:255.500px"></div><div class="x" style="left:1289.500px;width:255.500px;text-align:center;top:259.5px">Show Overlaps</div><div class="b l" style="left:1289.500px;top:313.5px;width:255.500px"></div><div class="x" style="left:1289.500px;width:255.500px;text-align:center;top:313.5px">Merge Vertices</div><div class="x" style="left:1289.500px;top:286.500px;color:#d0d0d0">Overlapping Vertices: 0</div>
<div class="abs" style="left:1564px;top:110px;width:21px;height:828px;background:#1b1b1b;border-radius:0 0 5px 0"></div><div class="abs" style="left:1563px;top:116.8px;width:20px;height:43.3px;background:#242424;border:1px solid #363636;border-left:none;border-radius:0 5px 5px 0"></div><div class="abs" style="left:1564px;top:116.8px;width:19px;height:43.3px;writing-mode:vertical-rl;font-size:13px;line-height:19px;text-align:center;color:#dcdcdc">Item</div><div class="abs" style="left:1563px;top:164.8px;width:20px;height:43.6px;background:#242424;border:1px solid #363636;border-left:none;border-radius:0 5px 5px 0"></div><div class="abs" style="left:1564px;top:164.8px;width:19px;height:43.6px;writing-mode:vertical-rl;font-size:13px;line-height:19px;text-align:center;color:#dcdcdc">Tool</div><div class="abs" style="left:1563px;top:213.5px;width:20px;height:43.9px;background:#242424;border:1px solid #363636;border-left:none;border-radius:0 5px 5px 0"></div><div class="abs" style="left:1564px;top:213.5px;width:19px;height:43.9px;writing-mode:vertical-rl;font-size:13px;line-height:19px;text-align:center;color:#dcdcdc">View</div><div class="abs" style="left:1563px;top:262.1px;width:20px;height:38.5px;background:#3e3e3e;border:1px solid #3e3e3e;border-left:none;border-radius:0 5px 5px 0"></div><div class="abs" style="left:1564px;top:262.1px;width:19px;height:38.5px;writing-mode:vertical-rl;font-size:13px;line-height:19px;text-align:center;color:#fff">Edit</div>
<div class="abs" style="left:1588px;top:56px;width:330.700px;height:27px;background:#282828;border-radius:5px 5px 0 0"></div><div class="b" style="left:1596.500px;top:59px;width:34px;background:#252525;box-shadow:inset 0 0 0 1px #2f2f2f"></div><svg style="left:1620px;top:67px" width="8" height="5" viewBox="0 0 8 5"><path d="M0.700 0.700L4 4l3.300-3.300" fill="none" stroke="#e0e0e0" stroke-width="1.300"/></svg><svg style="left:1600px;top:61px" width="17" height="16" viewBox="0 0 17 16"><rect x="1" y="1" width="5.500" height="3" fill="#e6e6e6"/><rect x="8" y="6.500" width="7.500" height="3" fill="#e6e6e6"/><rect x="8" y="12" width="7.500" height="3" fill="#e6e6e6"/><path d="M3 4v9.500h4M3 8h4" fill="none" stroke="#e6e6e6" stroke-width="1.200"/></svg><div class="b" style="left:1636.500px;top:59px;width:34px;background:#252525;box-shadow:inset 0 0 0 1px #2f2f2f"></div><svg style="left:1660px;top:67px" width="8" height="5" viewBox="0 0 8 5"><path d="M0.700 0.700L4 4l3.300-3.300" fill="none" stroke="#e0e0e0" stroke-width="1.300"/></svg><svg style="left:1640px;top:61px" width="17" height="16" viewBox="0 0 17 16" fill="none" stroke="#e6e6e6" stroke-width="1.200"><path d="M1 5v9.500h10"/><path d="M3 3.500v9h10"/><rect x="5" y="1.500" width="10" height="9" fill="#222"/><path d="M6.500 9l2.500-3 2 2 1.500-1.500 2 2.500z" fill="#e6e6e6" stroke="none"/></svg><div class="b" style="left:1687.500px;top:59px;width:129px;background:#1d1d1d"></div><div class="x" style="left:1716px;top:59px;color:#707070">Search</div><svg style="left:1692px;top:61px" width="17" height="16" viewBox="0 0 17 16" fill="none" stroke="#e6e6e6" stroke-width="1.400"><circle cx="10.500" cy="6" r="4.500"/><path d="M7.500 9.500l-5.500 5.500"/></svg><div class="b" style="left:1849.500px;top:59px;width:34px;background:#252525;box-shadow:inset 0 0 0 1px #2f2f2f"></div><svg style="left:1872px;top:67px" width="8" height="5" viewBox="0 0 8 5"><path d="M0.700 0.700L4 4l3.300-3.300" fill="none" stroke="#e0e0e0" stroke-width="1.300"/></svg><svg style="left:1852.500px;top:61px" width="17" height="16" viewBox="0 0 17 16" fill="none" stroke="#e6e6e6" stroke-width="1.300"><path d="M1 1.500h14l-5.500 6.500v6l-3-1.500v-4.500z"/></svg><div class="b l" style="left:1889.500px;top:59px;width:21px"></div><svg style="left:1892px;top:61px" width="17" height="16" viewBox="0 0 17 16" fill="none" stroke="#b8b8b8" stroke-width="1.200"><path d="M1.500 4.500h8M2.500 7v7.500h9v-5M5.500 10h3"/><circle cx="12.500" cy="4" r="3.300" fill="#e6e6e6" stroke="none"/><path d="M12.500 2v4M10.500 4h4" stroke="#545454"/></svg>
<svg style="left:1613px;top:88px" width="16" height="15" viewBox="0 0 16 15"><rect x="0" y="0" width="16" height="4" fill="#e6e6e6"/><rect x="1" y="5" width="14" height="10" fill="#e6e6e6"/><rect x="5.500" y="7" width="5" height="2" fill="#282828"/></svg><div class="x" style="left:1635.500px;top:86.500px">Scene Collection</div><svg style="left:1615.500px;top:115px" width="10" height="6" viewBox="0 0 10 6"><path d="M1 .7l4 4 4-4" fill="none" stroke="#e6e6e6" stroke-width="1.300"/></svg><div class="abs" style="left:1631.500px;top:107.500px;width:21px;height:20px;border-radius:4px;background:#484848"></div><svg style="left:1634.5px;top:110px" width="16" height="15" viewBox="0 0 16 15"><rect x="0" y="0" width="16" height="4" fill="#e6e6e6"/><rect x="1" y="5" width="14" height="10" fill="#e6e6e6"/><rect x="5.500" y="7" width="5" height="2" fill="#484848"/></svg><div class="x" style="left:1657px;top:108px">Collection</div><div class="abs" style="left:1849.500px;top:111.500px;width:12px;height:12px;background:#fff;border-radius:1.500px"></div><svg style="left:1850.500px;top:112px" width="10" height="10" viewBox="0 0 10 10"><path d="M1.500 5l2.500 3 4.500-7" fill="none" stroke="#222" stroke-width="1.700"/></svg><svg style="left:1868px;top:112.5px" width="16" height="10" viewBox="0 0 16 10"><path d="M0 5c3.500-6.500 12.500-6.500 16 0c-3.500 6.500-12.500 6.500-16 0z" fill="#fff"/><circle cx="8" cy="5" r="2.900" fill="#222"/><circle cx="8" cy="5" r="1.400" fill="#fff"/></svg><svg style="left:1890px;top:111px" width="16" height="13" viewBox="0 0 16 13"><path d="M0 3h3.500l1.500-3h6l1.500 3h3.500v10h-16z" fill="#fff"/><circle cx="8" cy="7.500" r="4" fill="#282828"/><circle cx="8" cy="7.500" r="2.700" fill="none" stroke="#fff" stroke-width="1.200"/></svg><div class="abs" style="left:1588px;top:128px;width:330.700px;height:21.500px;background:#2f4b80"></div><svg style="left:1591px;top:130.500px" width="16" height="16" viewBox="0 0 16 16" fill="none" stroke="#e6e6e6" stroke-width="1.100"><path d="M3 4.500v8M4.500 13.500h7M13 12v-5M4.500 3h5"/><rect x="1.500" y="1.500" width="3" height="3" rx="1"/><rect x="1.500" y="12" width="3" height="3" rx="1"/><rect x="11.500" y="12" width="3" height="3" rx="1"/><rect x="10.500" y="1" width="4.500" height="4.500" fill="#e6e6e6" stroke="none"/></svg><div class="abs" style="left:1619px;top:131px;width:1px;height:15px;background:#3d5a8e"></div><svg style="left:1640px;top:134px" width="6" height="10" viewBox="0 0 6 10"><path d="M.7 1l4 4-4 4" fill="none" stroke="#e6e6e6" stroke-width="1.300"/></svg><div class="abs" style="left:1653.500px;top:128.500px;width:21.500px;height:20.500px;border-radius:4px;background:#526d9f"></div><svg style="left:1656.500px;top:131.500px" width="16" height="15" viewBox="0 0 16 15"><path d="M1.500 1.500h13l-6.500 12z" fill="none" stroke="#f0a04a" stroke-width="2.200" stroke-linejoin="round"/></svg><div class="x" style="left:1678.500px;top:129.500px;color:#f0a54e">Cube</div><div class="abs" style="left:1732.500px;top:128.500px;width:21px;height:20.500px;border-radius:4px;background:#2a6c84"></div><svg style="left:1735px;top:131px" width="16" height="16" viewBox="0 0 16 16" fill="none" stroke="#1fd0c0" stroke-width="1.400"><path d="M3 3h10l-5 10z"/><circle cx="3" cy="3" r="1.700" fill="#2a6c84"/><circle cx="13" cy="3" r="1.700" fill="#2a6c84"/><circle cx="8" cy="13" r="1.700" fill="#2a6c84"/></svg><svg style="left:1868px;top:134px" width="16" height="10" viewBox="0 0 16 10"><path d="M0 5c3.500-6.500 12.500-6.500 16 0c-3.500 6.500-12.500 6.500-16 0z" fill="#fff"/><circle cx="8" cy="5" r="2.900" fill="#222"/><circle cx="8" cy="5" r="1.400" fill="#fff"/></svg><svg style="left:1890px;top:132.5px" width="16" height="13" viewBox="0 0 16 13"><path d="M0 3h3.500l1.500-3h6l1.500 3h3.500v10h-16z" fill="#fff"/><circle cx="8" cy="7.500" r="4" fill="#2f4b80"/><circle cx="8" cy="7.500" r="2.700" fill="none" stroke="#fff" stroke-width="1.200"/></svg>
<svg style="left:1588px;top:260px" width="110" height="40" viewBox="1588 260 110 40"><path d="M1591.300 283.700L1613.300 269.500L1614.400 276.800L1691 265.800L1691 273.800L1615.500 284.800L1616.500 292Z" fill="#fff"/></svg><div class="abs" style="left:1690px;top:199px;width:186px;height:114px;background:#fff;border-radius:4px"></div><div class="abs" id="c1" style="left:1700.500px;top:226.800px;font-size:23.800px;line-height:28px;font-weight:700;color:#000;white-space:nowrap;-webkit-text-stroke:1.050px #000;letter-spacing:1.550px">Found under</div><div class="abs" id="c2" style="left:1701.500px;top:259.800px;font-size:23.800px;line-height:28px;font-weight:700;color:#000;white-space:nowrap;-webkit-text-stroke:1.050px #000;letter-spacing:1.950px">Edit N-Panel</div><div class="abs" style="left:1701px;top:284.200px;width:52px;height:1.300px;background:#000"></div>
<div class="abs" style="left:1588px;top:364px;width:330.700px;height:27.500px;background:#333;border-radius:5px 5px 0 0"></div><div class="b" style="left:1597px;top:368px;width:32.500px;background:#292929"></div><svg style="left:1619.5px;top:376px" width="8" height="5" viewBox="0 0 8 5"><path d="M0.700 0.700L4 4l3.300-3.300" fill="none" stroke="#e0e0e0" stroke-width="1.300"/></svg><svg style="left:1600px;top:370px" width="18" height="16" viewBox="0 0 18 16"><rect x="1" y="1" width="16" height="6" rx="3" fill="#e6e6e6"/><rect x="1" y="9" width="16" height="6" rx="3" fill="#e6e6e6"/><circle cx="13.500" cy="4" r="2" fill="#222"/><circle cx="4.500" cy="12" r="2" fill="#222"/></svg><div class="b" style="left:1689px;top:368px;width:128px;background:#1d1d1d"></div><div class="x" style="left:1717px;top:368px;color:#707070">Search</div><svg style="left:1693px;top:370px" width="17" height="16" viewBox="0 0 17 16" fill="none" stroke="#e6e6e6" stroke-width="1.400"><circle cx="10.500" cy="6" r="4.500"/><path d="M7.500 9.500l-5.500 5.500"/></svg><div class="b" style="left:1890.500px;top:368px;width:21px;background:#292929"></div><svg style="left:1897px;top:376px" width="8" height="5" viewBox="0 0 8 5"><path d="M0.700 0.700L4 4l3.300-3.300" fill="none" stroke="#e0e0e0" stroke-width="1.300"/></svg><div class="abs" style="left:1588px;top:391.500px;width:32px;height:619.500px;background:#1f1f1f;border-radius:0 0 0 5px"></div><div class="abs" style="left:1591.500px;top:636.500px;width:29px;height:28px;background:#313131;border-radius:4px 0 0 4px"></div><svg style="left:1596.500px;top:405px" width="18" height="18" viewBox="0 0 18 18"><path d="M4 1v7M4 8a2.300 2.300 0 1 0 .1 0zM4 12.500v0" stroke="#e6e6e6" stroke-width="1.600" fill="#e6e6e6"/><path d="M13 9v7.500" stroke="#e6e6e6" stroke-width="2.400" stroke-linecap="round"/><path d="M10 2v3.500a3 3 0 0 0 6 0v-3.500" fill="none" stroke="#e6e6e6" stroke-width="2"/></svg><svg style="left:1596.500px;top:442.5px" width="18" height="18" viewBox="0 0 18 18"><rect x="1.500" y="6" width="15" height="10" rx="1.500" fill="none" stroke="#e6e6e6" stroke-width="1.600"/><rect x="4" y="8.500" width="7" height="5" fill="#e6e6e6"/><path d="M13.500 9v1M13.500 12v1" stroke="#e6e6e6" stroke-width="1.500"/><path d="M5 5.500l2-3h4l2 3" fill="none" stroke="#e6e6e6" stroke-width="1.400"/></svg><svg style="left:1596.500px;top:473.5px" width="18" height="18" viewBox="0 0 18 18"><rect x="2" y="1.500" width="14" height="4.500" rx="1" fill="#e6e6e6"/><path d="M4 7.500h10v9h-10z" fill="none" stroke="#e6e6e6" stroke-width="1.500"/><path d="M5.500 15l3-4 2 2 1.500-1.500 1.500 3.500z" fill="#e6e6e6"/><path d="M1.500 7v4M16.500 7v4" stroke="#e6e6e6" stroke-width="1.400"/></svg><svg style="left:1596.500px;top:504.5px" width="18" height="18" viewBox="0 0 18 18"><path d="M1 5v11.500h11M3 3.500v11h11" fill="none" stroke="#bdbdbd" stroke-width="1.200"/><rect x="5" y="1.500" width="11.500" height="11" fill="#222" stroke="#e6e6e6" stroke-width="1.300"/><path d="M6.500 11l3-4 2 2.500 1.500-1.500 2 3z" fill="#e6e6e6"/><circle cx="13.500" cy="4.500" r="1" fill="#e6e6e6"/></svg><svg style="left:1596.500px;top:534.5px" width="18" height="18" viewBox="0 0 18 18"><path d="M5 2l4 11h-8z" fill="#e6e6e6"/><circle cx="13" cy="3.500" r="2" fill="#e6e6e6"/><circle cx="12" cy="12.500" r="3.800" fill="#222" stroke="#e6e6e6" stroke-width="1.500"/><circle cx="11" cy="11.500" r="1.100" fill="#e6e6e6"/></svg><svg style="left:1596.500px;top:564px" width="18" height="18" viewBox="0 0 18 18"><circle cx="9" cy="9" r="6.500" fill="none" stroke="#d45f72" stroke-width="1.600"/><path d="M5 5c2 0 2 2 4 2s1 2 3 2 1 3-1 4-1-2-3-2-3-1-3-3z" fill="#d45f72"/><path d="M2.500 15.500l13-13" stroke="#d45f72" stroke-width="1.300"/></svg><svg style="left:1596.500px;top:603px" width="18" height="18" viewBox="0 0 18 18"><rect x="1.500" y="2" width="15" height="4" fill="#e6e6e6"/><rect x="2.500" y="7.500" width="13" height="8.500" fill="none" stroke="#e6e6e6" stroke-width="1.500"/><rect x="6.500" y="9.500" width="5" height="1.800" fill="#e6e6e6"/></svg><svg style="left:1596.500px;top:641.5px" width="18" height="18" viewBox="0 0 18 18"><rect x="4.500" y="4.500" width="9" height="9" fill="#f19a49"/><path d="M1.500 5v-3.500h3.500M13 1.500h3.500v3.500M16.500 13v3.500h-3.500M5 16.500h-3.500v-3.500" fill="none" stroke="#f19a49" stroke-width="1.500"/></svg><svg style="left:1596.500px;top:671px" width="18" height="18" viewBox="0 0 18 18"><path d="M2 16l7.500-7.500" stroke="#5b8fe0" stroke-width="3" stroke-linecap="round"/><path d="M8 5a5 5 0 0 1 7-3.500l-3 3 .5 2 2 .5 3-3a5 5 0 0 1-6.500 6.500z" fill="#5b8fe0"/></svg><svg style="left:1596.500px;top:702px" width="18" height="18" viewBox="0 0 18 18"><path d="M4 4l11 3M4 4l8 11M4 4v11" stroke="#5b8fe0" stroke-width="1.300" fill="none"/><circle cx="4" cy="4" r="2.500" fill="#5b8fe0"/><circle cx="15" cy="7" r="1.800" fill="#5b8fe0"/><circle cx="12.500" cy="15" r="1.800" fill="#5b8fe0"/><circle cx="4" cy="15" r="1.500" fill="#5b8fe0"/></svg><svg style="left:1596.500px;top:731px" width="18" height="18" viewBox="0 0 18 18"><path d="M14.500 4a7.500 7.500 0 1 0 0 10" fill="none" stroke="#5b8fe0" stroke-width="1.700"/><circle cx="9" cy="9" r="3" fill="#5b8fe0"/><circle cx="15" cy="9" r="1.500" fill="#5b8fe0"/></svg><svg style="left:1596.500px;top:761px" width="18" height="18" viewBox="0 0 18 18"><path d="M2 12a5 5 0 0 1 2-6l7-4a4 4 0 0 1 5 5l-5 8a5 5 0 0 1-9-3z" fill="none" stroke="#5b8fe0" stroke-width="1.600"/><circle cx="7" cy="11.500" r="2.300" fill="none" stroke="#5b8fe0" stroke-width="1.500"/><circle cx="13" cy="5" r="1.200" fill="#5b8fe0"/></svg><svg style="left:1596.500px;top:791px" width="18" height="18" viewBox="0 0 18 18"><path d="M3 3.500h12l-6 11.500z" fill="none" stroke="#21c78c" stroke-width="1.600"/><circle cx="3" cy="3.500" r="2" fill="#222" stroke="#21c78c" stroke-width="1.400"/><circle cx="15" cy="3.500" r="2" fill="#222" stroke="#21c78c" stroke-width="1.400"/><circle cx="9" cy="15" r="2" fill="#222" stroke="#21c78c" stroke-width="1.400"/></svg><svg style="left:1596.500px;top:821px" width="18" height="18" viewBox="0 0 18 18"><circle cx="9" cy="9" r="7.500" fill="#d45f72"/><path d="M9 9v-7.500a7.500 7.500 0 0 0-7.500 7.500zM9 9v7.500a7.500 7.500 0 0 0 7.500-7.500z" fill="#222"/><circle cx="9" cy="9" r="7" fill="none" stroke="#d45f72" stroke-width="1.400"/></svg><svg style="left:1596.500px;top:859px" width="18" height="18" viewBox="0 0 18 18"><rect x="1" y="1" width="16" height="16" fill="#7a3040"/><rect x="1" y="1" width="4" height="4" fill="#d45f72"/><rect x="1" y="9" width="4" height="4" fill="#d45f72"/><rect x="5" y="5" width="4" height="4" fill="#d45f72"/><rect x="5" y="13" width="4" height="4" fill="#d45f72"/><rect x="9" y="1" width="4" height="4" fill="#d45f72"/><rect x="9" y="9" width="4" height="4" fill="#d45f72"/><rect x="13" y="5" width="4" height="4" fill="#d45f72"/><rect x="13" y="13" width="4" height="4" fill="#d45f72"/></svg>
<svg style="left:1632px;top:403px" width="17" height="17" viewBox="0 0 17 17"><rect x="4" y="4" width="9" height="9" fill="#e6e6e6"/><path d="M1 4.500v-3.500h3.500M12.500 1h3.500v3.500M16 12.500v3.500h-3.500M4.500 16h-3.500v-3.500" fill="none" stroke="#e6e6e6" stroke-width="1.300"/></svg><div class="x" style="left:1658.500px;top:401.500px">Cube</div><svg style="left:1893px;top:403px" width="17" height="17" viewBox="0 0 17 17" fill="none" stroke="#9a9a9a" stroke-width="1.200"><path d="M10 1.500l5.500 5.500-1.500.5-3 3-.5 3.500-6-6 3.500-.5 3-3zM6 11l-4.500 4.500"/></svg><div class="b" style="left:1632px;top:441px;width:31.500px;background:#2a2a2a;border-radius:4px 0 0 4px"></div><div class="b" style="left:1664px;top:441px;width:246px;background:#1d1d1d;border-radius:0 4px 4px 0"></div><svg style="left:1634.5px;top:442.5px" width="17" height="17" viewBox="0 0 17 17"><rect x="4" y="4" width="9" height="9" fill="#e6e6e6"/><path d="M1 4.500v-3.500h3.500M12.500 1h3.500v3.500M16 12.500v3.500h-3.500M4.500 16h-3.500v-3.500" fill="none" stroke="#e6e6e6" stroke-width="1.300"/></svg><svg style="left:1653px;top:449px" width="8" height="5" viewBox="0 0 8 5"><path d="M0.700 0.700L4 4l3.300-3.300" fill="none" stroke="#e0e0e0" stroke-width="1.300"/></svg><div class="x" style="left:1672px;top:441px">Cube</div>
<div class="abs" style="left:1628.500px;top:474px;width:281px;height:304px;background:#3c3c3c;border-radius:4px"></div><svg style="left:1637.500px;top:484.500px" width="10" height="6" viewBox="0 0 10 6"><path d="M1 .7l4 4 4-4" fill="none" stroke="#e6e6e6" stroke-width="1.300"/></svg><div class="x" style="left:1652px;top:477px">Transform</div><svg style="left:1890.5px;top:483px" width="12" height="5" viewBox="0 0 12 5"><g fill="#7a7a7a"><rect x="0" y="0" width="1.500" height="1.200"/><rect x="3" y="0" width="1.500" height="1.200"/><rect x="6" y="0" width="1.500" height="1.200"/><rect x="9" y="0" width="1.500" height="1.200"/><rect x="0" y="3" width="1.500" height="1.200"/><rect x="3" y="3" width="1.500" height="1.200"/><rect x="6" y="3" width="1.500" height="1.200"/><rect x="9" y="3" width="1.500" height="1.200"/></g></svg><div class="x" style="left:1629px;width:100px;text-align:right;top:508.70000000000005px">Location X</div><div class="b l" style="left:1740px;top:508.70000000000005px;width:117px;border-radius:4px 4px 0 0"></div><div class="x" style="left:1740px;width:117px;text-align:center;top:508.70000000000005px">0 m</div><svg style="left:1860px;top:510.70000000000005px" width="16" height="14" viewBox="0 0 16 14" fill="none" stroke="#c8c8c8" stroke-width="1.200"><rect x="6.500" y="6.500" width="9" height="6.500" rx="1"/><path d="M8 6.500v-2.500a3 3 0 0 0-6 0v1.500"/><path d="M10 9.500h2" /></svg><div class="abs" style="left:1888.500px;top:516.7px;width:4px;height:4px;border-radius:50%;background:#e6e6e6"></div><div class="x" style="left:1629px;width:100px;text-align:right;top:530.5px">Y</div><div class="b l" style="left:1740px;top:530.5px;width:117px;border-radius:0"></div><div class="x" style="left:1740px;width:117px;text-align:center;top:530.5px">0 m</div><svg style="left:1860px;top:532.5px" width="16" height="14" viewBox="0 0 16 14" fill="none" stroke="#c8c8c8" stroke-width="1.200"><rect x="6.500" y="6.500" width="9" height="6.500" rx="1"/><path d="M8 6.500v-2.500a3 3 0 0 0-6 0v1.500"/><path d="M10 9.500h2" /></svg><div class="abs" style="left:1888.500px;top:538.5px;width:4px;height:4px;border-radius:50%;background:#e6e6e6"></div><div class="x" style="left:1629px;width:100px;text-align:right;top:552.3px">Z</div><div class="b l" style="left:1740px;top:552.3px;width:117px;border-radius:0 0 4px 4px"></div><div class="x" style="left:1740px;width:117px;text-align:center;top:552.3px">0 m</div><svg style="left:1860px;top:554.3px" width="16" height="14" viewBox="0 0 16 14" fill="none" stroke="#c8c8c8" stroke-width="1.200"><rect x="6.500" y="6.500" width="9" height="6.500" rx="1"/><path d="M8 6.500v-2.500a3 3 0 0 0-6 0v1.500"/><path d="M10 9.500h2" /></svg><div class="abs" style="left:1888.500px;top:560.3px;width:4px;height:4px;border-radius:50%;background:#e6e6e6"></div><div class="x" style="left:1629px;width:100px;text-align:right;top:579.7px">Rotation X</div><div class="b l" style="left:1740px;top:579.7px;width:117px;border-radius:4px 4px 0 0"></div><div class="x" style="left:1740px;width:117px;text-align:center;top:579.7px">0°</div><svg style="left:1860px;top:581.7px" width="16" height="14" viewBox="0 0 16 14" fill="none" stroke="#c8c8c8" stroke-width="1.200"><rect x="6.500" y="6.500" width="9" height="6.500" rx="1"/><path d="M8 6.500v-2.500a3 3 0 0 0-6 0v1.500"/><path d="M10 9.500h2" /></svg><div class="abs" style="left:1888.500px;top:587.7px;width:4px;height:4px;border-radius:50%;background:#e6e6e6"></div><div class="x" style="left:1629px;width:100px;text-align:right;top:601.5px">Y</div><div class="b l" style="left:1740px;top:601.5px;width:117px;border-radius:0"></div><div class="x" style="left:1740px;width:117px;text-align:center;top:601.5px">0°</div><svg style="left:1860px;top:603.5px" width="16" height="14" viewBox="0 0 16 14" fill="none" stroke="#c8c8c8" stroke-width="1.200"><rect x="6.500" y="6.500" width="9" height="6.500" rx="1"/><path d="M8 6.500v-2.500a3 3 0 0 0-6 0v1.500"/><path d="M10 9.500h2" /></svg><div class="abs" style="left:1888.500px;top:609.5px;width:4px;height:4px;border-radius:50%;background:#e6e6e6"></div><div class="x" style="left:1629px;width:100px;text-align:right;top:623.3px">Z</div><div class="b l" style="left:1740px;top:623.3px;width:117px;border-radius:0 0 4px 4px"></div><div class="x" style="left:1740px;width:117px;text-align:center;top:623.3px">0°</div><svg style="left:1860px;top:625.3px" width="16" height="14" viewBox="0 0 16 14" fill="none" stroke="#c8c8c8" stroke-width="1.200"><rect x="6.500" y="6.500" width="9" height="6.500" rx="1"/><path d="M8 6.500v-2.500a3 3 0 0 0-6 0v1.500"/><path d="M10 9.500h2" /></svg><div class="abs" style="left:1888.500px;top:631.3px;width:4px;height:4px;border-radius:50%;background:#e6e6e6"></div><div class="x" style="left:1629px;width:100px;text-align:right;top:650px">Mode</div><div class="b" style="left:1740px;top:650.500px;width:117px;background:#282828"></div><div class="x" style="left:1748.500px;top:650.500px">XYZ Euler</div><svg style="left:1846px;top:658.5px" width="8" height="5" viewBox="0 0 8 5"><path d="M0.700 0.700L4 4l3.300-3.300" fill="none" stroke="#e0e0e0" stroke-width="1.300"/></svg><div class="abs" style="left:1888.500px;top:658px;width:4px;height:4px;border-radius:50%;background:#e6e6e6"></div><div class="x" style="left:1629px;width:100px;text-align:right;top:677px">Scale X</div><div class="b l" style="left:1740px;top:677px;width:117px;border-radius:4px 4px 0 0"></div><div class="x" style="left:1740px;width:117px;text-align:center;top:677px">1.000</div><svg style="left:1860px;top:679px" width="16" height="14" viewBox="0 0 16 14" fill="none" stroke="#c8c8c8" stroke-width="1.200"><rect x="6.500" y="6.500" width="9" height="6.500" rx="1"/><path d="M8 6.500v-2.500a3 3 0 0 0-6 0v1.500"/><path d="M10 9.500h2" /></svg><div class="abs" style="left:1888.500px;top:685px;width:4px;height:4px;border-radius:50%;background:#e6e6e6"></div><div class="x" style="left:1629px;width:100px;text-align:right;top:698.8px">Y</div><div class="b l" style="left:1740px;top:698.8px;width:117px;border-radius:0"></div><div class="x" style="left:1740px;width:117px;text-align:center;top:698.8px">1.000</div><svg style="left:1860px;top:700.8px" width="16" height="14" viewBox="0 0 16 14" fill="none" stroke="#c8c8c8" stroke-width="1.200"><rect x="6.500" y="6.500" width="9" height="6.500" rx="1"/><path d="M8 6.500v-2.500a3 3 0 0 0-6 0v1.500"/><path d="M10 9.500h2" /></svg><div class="abs" style="left:1888.500px;top:706.8px;width:4px;height:4px;border-radius:50%;background:#e6e6e6"></div><div class="x" style="left:1629px;width:100px;text-align:right;top:720.6px">Z</div><div class="b l" style="left:1740px;top:720.6px;width:117px;border-radius:0 0 4px 4px"></div><div class="x" style="left:1740px;width:117px;text-align:center;top:720.6px">1.000</div><svg style="left:1860px;top:722.6px" width="16" height="14" viewBox="0 0 16 14" fill="none" stroke="#c8c8c8" stroke-width="1.200"><rect x="6.500" y="6.500" width="9" height="6.500" rx="1"/><path d="M8 6.500v-2.500a3 3 0 0 0-6 0v1.500"/><path d="M10 9.500h2" /></svg><div class="abs" style="left:1888.500px;top:728.6px;width:4px;height:4px;border-radius:50%;background:#e6e6e6"></div><svg style="left:1655.5px;top:760px" width="6" height="10" viewBox="0 0 6 10"><path d="M.7 1l4 4-4 4" fill="none" stroke="#e6e6e6" stroke-width="1.300"/></svg><div class="x" style="left:1666.500px;top:755px">Delta Transform</div>
<div class="abs" style="left:1628.500px;top:781.0px;width:281px;height:24.500px;background:#3c3c3c;border-radius:4px"></div><svg style="left:1640px;top:788.5px" width="6" height="10" viewBox="0 0 6 10"><path d="M.7 1l4 4-4 4" fill="none" stroke="#e6e6e6" stroke-width="1.300"/></svg><div class="x" style="left:1651.500px;top:783.5px">Relations</div><svg style="left:1890.5px;top:790.0px" width="12" height="5" viewBox="0 0 12 5"><g fill="#7a7a7a"><rect x="0" y="0" width="1.500" height="1.200"/><rect x="3" y="0" width="1.500" height="1.200"/><rect x="6" y="0" width="1.500" height="1.200"/><rect x="9" y="0" width="1.500" height="1.200"/><rect x="0" y="3" width="1.500" height="1.200"/><rect x="3" y="3" width="1.500" height="1.200"/><rect x="6" y="3" width="1.500" height="1.200"/><rect x="9" y="3" width="1.500" height="1.200"/></g></svg><div class="abs" style="left:1628.500px;top:809.5px;width:281px;height:24.500px;background:#3c3c3c;border-radius:4px"></div><svg style="left:1640px;top:817.0px" width="6" height="10" viewBox="0 0 6 10"><path d="M.7 1l4 4-4 4" fill="none" stroke="#e6e6e6" stroke-width="1.300"/></svg><div class="x" style="left:1651.500px;top:812.0px">Collections</div><svg style="left:1890.5px;top:818.5px" width="12" height="5" viewBox="0 0 12 5"><g fill="#7a7a7a"><rect x="0" y="0" width="1.500" height="1.200"/><rect x="3" y="0" width="1.500" height="1.200"/><rect x="6" y="0" width="1.500" height="1.200"/><rect x="9" y="0" width="1.500" height="1.200"/><rect x="0" y="3" width="1.500" height="1.200"/><rect x="3" y="3" width="1.500" height="1.200"/><rect x="6" y="3" width="1.500" height="1.200"/><rect x="9" y="3" width="1.500" height="1.200"/></g></svg><div class="abs" style="left:1628.500px;top:838.0px;width:281px;height:24.500px;background:#3c3c3c;border-radius:4px"></div><svg style="left:1640px;top:845.5px" width="6" height="10" viewBox="0 0 6 10"><path d="M.7 1l4 4-4 4" fill="none" stroke="#e6e6e6" stroke-width="1.300"/></svg><div class="x" style="left:1651.500px;top:840.5px">Instancing</div><svg style="left:1890.5px;top:847.0px" width="12" height="5" viewBox="0 0 12 5"><g fill="#7a7a7a"><rect x="0" y="0" width="1.500" height="1.200"/><rect x="3" y="0" width="1.500" height="1.200"/><rect x="6" y="0" width="1.500" height="1.200"/><rect x="9" y="0" width="1.500" height="1.200"/><rect x="0" y="3" width="1.500" height="1.200"/><rect x="3" y="3" width="1.500" height="1.200"/><rect x="6" y="3" width="1.500" height="1.200"/><rect x="9" y="3" width="1.500" height="1.200"/></g></svg><div class="abs" style="left:1628.500px;top:866.5px;width:281px;height:24.500px;background:#3c3c3c;border-radius:4px"></div><svg style="left:1640px;top:874.0px" width="6" height="10" viewBox="0 0 6 10"><path d="M.7 1l4 4-4 4" fill="none" stroke="#e6e6e6" stroke-width="1.300"/></svg><div class="x" style="left:1651.500px;top:869.0px">Motion Paths</div><svg style="left:1890.5px;top:875.5px" width="12" height="5" viewBox="0 0 12 5"><g fill="#7a7a7a"><rect x="0" y="0" width="1.500" height="1.200"/><rect x="3" y="0" width="1.500" height="1.200"/><rect x="6" y="0" width="1.500" height="1.200"/><rect x="9" y="0" width="1.500" height="1.200"/><rect x="0" y="3" width="1.500" height="1.200"/><rect x="3" y="3" width="1.500" height="1.200"/><rect x="6" y="3" width="1.500" height="1.200"/><rect x="9" y="3" width="1.500" height="1.200"/></g></svg><div class="abs" style="left:1628.500px;top:895.0px;width:281px;height:24.500px;background:#3c3c3c;border-radius:4px"></div><svg style="left:1640px;top:902.5px" width="6" height="10" viewBox="0 0 6 10"><path d="M.7 1l4 4-4 4" fill="none" stroke="#e6e6e6" stroke-width="1.300"/></svg><div class="x" style="left:1651.500px;top:897.5px">Visibility</div><svg style="left:1890.5px;top:904.0px" width="12" height="5" viewBox="0 0 12 5"><g fill="#7a7a7a"><rect x="0" y="0" width="1.500" height="1.200"/><rect x="3" y="0" width="1.500" height="1.200"/><rect x="6" y="0" width="1.500" height="1.200"/><rect x="9" y="0" width="1.500" height="1.200"/><rect x="0" y="3" width="1.500" height="1.200"/><rect x="3" y="3" width="1.500" height="1.200"/><rect x="6" y="3" width="1.500" height="1.200"/><rect x="9" y="3" width="1.500" height="1.200"/></g></svg><div class="abs" style="left:1628.500px;top:923.5px;width:281px;height:24.500px;background:#3c3c3c;border-radius:4px"></div><svg style="left:1640px;top:931.0px" width="6" height="10" viewBox="0 0 6 10"><path d="M.7 1l4 4-4 4" fill="none" stroke="#e6e6e6" stroke-width="1.300"/></svg><div class="x" style="left:1651.500px;top:926.0px">Viewport Display</div><svg style="left:1890.5px;top:932.5px" width="12" height="5" viewBox="0 0 12 5"><g fill="#7a7a7a"><rect x="0" y="0" width="1.500" height="1.200"/><rect x="3" y="0" width="1.500" height="1.200"/><rect x="6" y="0" width="1.500" height="1.200"/><rect x="9" y="0" width="1.500" height="1.200"/><rect x="0" y="3" width="1.500" height="1.200"/><rect x="3" y="3" width="1.500" height="1.200"/><rect x="6" y="3" width="1.500" height="1.200"/><rect x="9" y="3" width="1.500" height="1.200"/></g></svg><div class="abs" style="left:1628.500px;top:952.0px;width:281px;height:24.500px;background:#3c3c3c;border-radius:4px"></div><svg style="left:1640px;top:959.5px" width="6" height="10" viewBox="0 0 6 10"><path d="M.7 1l4 4-4 4" fill="none" stroke="#e6e6e6" stroke-width="1.300"/></svg><div class="x" style="left:1651.500px;top:954.5px">Line Art</div><svg style="left:1890.5px;top:961.0px" width="12" height="5" viewBox="0 0 12 5"><g fill="#7a7a7a"><rect x="0" y="0" width="1.500" height="1.200"/><rect x="3" y="0" width="1.500" height="1.200"/><rect x="6" y="0" width="1.500" height="1.200"/><rect x="9" y="0" width="1.500" height="1.200"/><rect x="0" y="3" width="1.500" height="1.200"/><rect x="3" y="3" width="1.500" height="1.200"/><rect x="6" y="3" width="1.500" height="1.200"/><rect x="9" y="3" width="1.500" height="1.200"/></g></svg><div class="abs" style="left:1628.500px;top:980.5px;width:281px;height:24.500px;background:#3c3c3c;border-radius:4px"></div><svg style="left:1640px;top:988.0px" width="6" height="10" viewBox="0 0 6 10"><path d="M.7 1l4 4-4 4" fill="none" stroke="#e6e6e6" stroke-width="1.300"/></svg><div class="x" style="left:1651.500px;top:983.0px">Custom Properties</div><svg style="left:1890.5px;top:989.5px" width="12" height="5" viewBox="0 0 12 5"><g fill="#7a7a7a"><rect x="0" y="0" width="1.500" height="1.200"/><rect x="3" y="0" width="1.500" height="1.200"/><rect x="6" y="0" width="1.500" height="1.200"/><rect x="9" y="0" width="1.500" height="1.200"/><rect x="0" y="3" width="1.500" height="1.200"/><rect x="3" y="3" width="1.500" height="1.200"/><rect x="6" y="3" width="1.500" height="1.200"/><rect x="9" y="3" width="1.500" height="1.200"/></g></svg>
<div class="abs" style="left:0;top:940px;width:1585px;height:27.500px;background:#2e2e2e;border-radius:5px 5px 0 0"></div><div class="b" style="left:10.500px;top:944.500px;width:30px;height:19px;background:#222"></div><svg style="left:31px;top:952px" width="8" height="5" viewBox="0 0 8 5"><path d="M0.700 0.700L4 4l3.300-3.300" fill="none" stroke="#e0e0e0" stroke-width="1.300"/></svg><svg style="left:13px;top:946px" width="16" height="16" viewBox="0 0 16 16"><circle cx="8" cy="8" r="8" fill="#e6e6e6"/><path d="M10.500 3.500L6 8.200l3.800 3.800" stroke="#222" stroke-width="1.800" fill="none"/></svg><div class="b" style="left:50px;top:944.500px;width:77px;height:19px;background:#2a2a2a"></div><div class="x" style="left:57px;top:944px">Playback</div><svg style="left:116px;top:952px" width="8" height="5" viewBox="0 0 8 5"><path d="M0.700 0.700L4 4l3.300-3.300" fill="none" stroke="#e0e0e0" stroke-width="1.300"/></svg><div class="b" style="left:129px;top:944.500px;width:65px;height:19px;background:#2a2a2a"></div><div class="x" style="left:135.500px;top:944px">Keying</div><svg style="left:183px;top:952px" width="8" height="5" viewBox="0 0 8 5"><path d="M0.700 0.700L4 4l3.300-3.300" fill="none" stroke="#e0e0e0" stroke-width="1.300"/></svg><div class="x" style="left:206px;top:944px">View</div><div class="x" style="left:251px;top:944px">Marker</div>
<div class="b l" style="left:692.500px;top:944px;width:21px;height:21px;border-radius:4px 0 0 4px;background:#4f4f4f"></div><div class="b" style="left:714px;top:944px;width:19.500px;height:21px;border-radius:0 4px 4px 0;background:#2a2a2a"></div><svg style="left:720px;top:952.5px" width="8" height="5" viewBox="0 0 8 5"><path d="M0.700 0.700L4 4l3.300-3.300" fill="none" stroke="#5a5a5a" stroke-width="1.300"/></svg><svg style="left:696px;top:947.500px" width="14" height="14" viewBox="0 0 14 14"><circle cx="7" cy="7" r="5.300" fill="none" stroke="#c8c8c8" stroke-width="1.300"/></svg><div class="b l" style="left:741.0px;top:944px;width:21px;height:21px;border-radius:4px 0 0 4px;background:#4f4f4f"></div><div class="b l" style="left:762.6px;top:944px;width:21px;height:21px;border-radius:0;background:#4f4f4f"></div><div class="b l" style="left:784.2px;top:944px;width:21px;height:21px;border-radius:0;background:#4f4f4f"></div><div class="b l" style="left:805.8px;top:944px;width:21px;height:21px;border-radius:0;background:#4f4f4f"></div><div class="b l" style="left:827.4px;top:944px;width:21px;height:21px;border-radius:0;background:#4f4f4f"></div><div class="b l" style="left:849.0px;top:944px;width:21px;height:21px;border-radius:0 4px 4px 0;background:#4f4f4f"></div><svg style="left:743.5px;top:946.500px" width="16" height="16" viewBox="0 0 14 14" fill="#f0f0f0"><rect x="1.500" y="2" width="2" height="10"/><path d="M12 2v10l-7.500-5z"/></svg><svg style="left:765.1px;top:946.500px" width="16" height="16" viewBox="0 0 14 14" fill="#f0f0f0"><path d="M0 7l3.500-4 3.500 4-3.500 4z"/><path d="M14 2.500v9l-6.500-4.500z"/></svg><svg style="left:786.7px;top:946.500px" width="16" height="16" viewBox="0 0 14 14" fill="#f0f0f0"><path d="M12 1.500v11l-10-5.500z"/></svg><svg style="left:808.3px;top:946.500px" width="16" height="16" viewBox="0 0 14 14" fill="#f0f0f0"><path d="M2 1.500v11l10-5.500z"/></svg><svg style="left:829.9px;top:946.500px" width="16" height="16" viewBox="0 0 14 14" fill="#f0f0f0"><path d="M14 7l-3.500-4-3.500 4 3.500 4z"/><path d="M0 2.500v9l6.500-4.500z"/></svg><svg style="left:851.5px;top:946.500px" width="16" height="16" viewBox="0 0 14 14" fill="#f0f0f0"><rect x="10.500" y="2" width="2" height="10"/><path d="M2 2v10l7.500-5z"/></svg>
<div class="b l" style="left:1281px;top:944px;width:79px;height:21px"></div><div class="x" style="left:1281px;width:79px;text-align:center;top:944.500px">1</div><div class="b l" style="left:1367px;top:944px;width:21px;height:21px;border-radius:4px 0 0 4px"></div><div class="b l" style="left:1388.500px;top:944px;width:96.500px;height:21px;border-radius:0"></div><div class="b l" style="left:1485.500px;top:944px;width:92px;height:21px;border-radius:0 4px 4px 0"></div><svg style="left:1369.500px;top:946px" width="16" height="17" viewBox="0 0 16 17" fill="none" stroke="#e6e6e6" stroke-width="1.300"><circle cx="8" cy="9.500" r="6"/><path d="M8 6v4h3M6 1.500h4M13 3.500l1.500 1.500"/></svg><div class="x" style="left:1405.500px;top:944.500px">Start</div><div class="x" style="left:1440px;width:30px;text-align:right;top:944.500px">1</div><div class="x" style="left:1502.500px;top:944.500px">End</div><div class="x" style="left:1522px;width:40px;text-align:right;top:944.500px">250</div>
<div class="abs" style="left:0;top:967.500px;width:1585px;height:44px;background:#1d1d1d;border-radius:0 0 5px 5px"></div><div class="abs" style="left:59px;top:994px;width:1468px;height:17.500px;background:#2e2e2e"></div><div class="x" style="left:92.0px;width:40px;text-align:center;top:971.500px;color:#c4c4c4">10</div><div class="x" style="left:150.9px;width:40px;text-align:center;top:971.500px;color:#c4c4c4">20</div><div class="x" style="left:209.8px;width:40px;text-align:center;top:971.500px;color:#c4c4c4">30</div><div class="x" style="left:268.7px;width:40px;text-align:center;top:971.500px;color:#c4c4c4">40</div><div class="x" style="left:327.6px;width:40px;text-align:center;top:971.500px;color:#c4c4c4">50</div><div class="x" style="left:386.5px;width:40px;text-align:center;top:971.500px;color:#c4c4c4">60</div><div class="x" style="left:445.4px;width:40px;text-align:center;top:971.500px;color:#c4c4c4">70</div><div class="x" style="left:504.3px;width:40px;text-align:center;top:971.500px;color:#c4c4c4">80</div><div class="x" style="left:563.2px;width:40px;text-align:center;top:971.500px;color:#c4c4c4">90</div><div class="x" style="left:622.1px;width:40px;text-align:center;top:971.500px;color:#c4c4c4">100</div><div class="x" style="left:681.0px;width:40px;text-align:center;top:971.500px;color:#c4c4c4">110</div><div class="x" style="left:739.9px;width:40px;text-align:center;top:971.500px;color:#c4c4c4">120</div><div class="x" style="left:798.8px;width:40px;text-align:center;top:971.500px;color:#c4c4c4">130</div><div class="x" style="left:857.7px;width:40px;text-align:center;top:971.500px;color:#c4c4c4">140</div><div class="x" style="left:916.6px;width:40px;text-align:center;top:971.500px;color:#c4c4c4">150</div><div class="x" style="left:975.5px;width:40px;text-align:center;top:971.500px;color:#c4c4c4">160</div><div class="x" style="left:1034.4px;width:40px;text-align:center;top:971.500px;color:#c4c4c4">170</div><div class="x" style="left:1093.3px;width:40px;text-align:center;top:971.500px;color:#c4c4c4">180</div><div class="x" style="left:1152.2px;width:40px;text-align:center;top:971.500px;color:#c4c4c4">190</div><div class="x" style="left:1211.1px;width:40px;text-align:center;top:971.500px;color:#c4c4c4">200</div><div class="x" style="left:1270.0px;width:40px;text-align:center;top:971.500px;color:#c4c4c4">210</div><div class="x" style="left:1328.9px;width:40px;text-align:center;top:971.500px;color:#c4c4c4">220</div><div class="x" style="left:1387.8px;width:40px;text-align:center;top:971.500px;color:#c4c4c4">230</div><div class="x" style="left:1446.7px;width:40px;text-align:center;top:971.500px;color:#c4c4c4">240</div><div class="x" style="left:1505.6px;width:40px;text-align:center;top:971.500px;color:#c4c4c4">250</div><div class="abs" style="left:82.0px;top:994px;width:1px;height:17.500px;background:#282828"></div><div class="abs" style="left:111.5px;top:994px;width:1.5px;height:17.500px;background:#1e1e1e"></div><div class="abs" style="left:140.9px;top:994px;width:1px;height:17.500px;background:#282828"></div><div class="abs" style="left:170.4px;top:994px;width:1.5px;height:17.500px;background:#1e1e1e"></div><div class="abs" style="left:199.8px;top:994px;width:1px;height:17.500px;background:#282828"></div><div class="abs" style="left:229.3px;top:994px;width:1.5px;height:17.500px;background:#1e1e1e"></div><div class="abs" style="left:258.8px;top:994px;width:1px;height:17.500px;background:#282828"></div><div class="abs" style="left:288.2px;top:994px;width:1.5px;height:17.500px;background:#1e1e1e"></div><div class="abs" style="left:317.7px;top:994px;width:1px;height:17.500px;background:#282828"></div><div class="abs" style="left:347.1px;top:994px;width:1.5px;height:17.500px;background:#1e1e1e"></div><div class="abs" style="left:376.6px;top:994px;width:1px;height:17.500px;background:#282828"></div><div class="abs" style="left:406.0px;top:994px;width:1.5px;height:17.500px;background:#1e1e1e"></div><div class="abs" style="left:435.4px;top:994px;width:1px;height:17.500px;background:#282828"></div><div class="abs" style="left:464.9px;top:994px;width:1.5px;height:17.500px;background:#1e1e1e"></div><div class="abs" style="left:494.4px;top:994px;width:1px;height:17.500px;background:#282828"></div><div class="abs" style="left:523.8px;top:994px;width:1.5px;height:17.500px;background:#1e1e1e"></div><div class="abs" style="left:553.2px;top:994px;width:1px;height:17.500px;background:#282828"></div><div class="abs" style="left:582.7px;top:994px;width:1.5px;height:17.500px;background:#1e1e1e"></div><div class="abs" style="left:612.1px;top:994px;width:1px;height:17.500px;background:#282828"></div><div class="abs" style="left:641.6px;top:994px;width:1.5px;height:17.500px;background:#1e1e1e"></div><div class="abs" style="left:671.0px;top:994px;width:1px;height:17.500px;background:#282828"></div><div class="abs" style="left:700.5px;top:994px;width:1.5px;height:17.500px;background:#1e1e1e"></div><div class="abs" style="left:729.9px;top:994px;width:1px;height:17.500px;background:#282828"></div><div class="abs" style="left:759.4px;top:994px;width:1.5px;height:17.500px;background:#1e1e1e"></div><div class="abs" style="left:788.9px;top:994px;width:1px;height:17.500px;background:#282828"></div><div class="abs" style="left:818.3px;top:994px;width:1.5px;height:17.500px;background:#1e1e1e"></div><div class="abs" style="left:847.8px;top:994px;width:1px;height:17.500px;background:#282828"></div><div class="abs" style="left:877.2px;top:994px;width:1.5px;height:17.500px;background:#1e1e1e"></div><div class="abs" style="left:906.6px;top:994px;width:1px;height:17.500px;background:#282828"></div><div class="abs" style="left:936.1px;top:994px;width:1.5px;height:17.500px;background:#1e1e1e"></div><div class="abs" style="left:965.5px;top:994px;width:1px;height:17.500px;background:#282828"></div><div class="abs" style="left:995.0px;top:994px;width:1.5px;height:17.500px;background:#1e1e1e"></div><div class="abs" style="left:1024.4px;top:994px;width:1px;height:17.500px;background:#282828"></div><div class="abs" style="left:1053.9px;top:994px;width:1.5px;height:17.500px;background:#1e1e1e"></div><div class="abs" style="left:1083.3px;top:994px;width:1px;height:17.500px;background:#282828"></div><div class="abs" style="left:1112.8px;top:994px;width:1.5px;height:17.500px;background:#1e1e1e"></div><div class="abs" style="left:1142.2px;top:994px;width:1px;height:17.500px;background:#282828"></div><div class="abs" style="left:1171.7px;top:994px;width:1.5px;height:17.500px;background:#1e1e1e"></div><div class="abs" style="left:1201.1px;top:994px;width:1px;height:17.500px;background:#282828"></div><div class="abs" style="left:1230.6px;top:994px;width:1.5px;height:17.500px;background:#1e1e1e"></div><div class="abs" style="left:1260.0px;top:994px;width:1px;height:17.500px;background:#282828"></div><div class="abs" style="left:1289.5px;top:994px;width:1.5px;height:17.500px;background:#1e1e1e"></div><div class="abs" style="left:1318.9px;top:994px;width:1px;height:17.500px;background:#282828"></div><div class="abs" style="left:1348.4px;top:994px;width:1.5px;height:17.500px;background:#1e1e1e"></div><div class="abs" style="left:1377.8px;top:994px;width:1px;height:17.500px;background:#282828"></div><div class="abs" style="left:1407.3px;top:994px;width:1.5px;height:17.500px;background:#1e1e1e"></div><div class="abs" style="left:1436.7px;top:994px;width:1px;height:17.500px;background:#282828"></div><div class="abs" style="left:1466.2px;top:994px;width:1.5px;height:17.500px;background:#1e1e1e"></div><div class="abs" style="left:1495.6px;top:994px;width:1px;height:17.500px;background:#282828"></div><div class="abs" style="left:9px;top:1000.300px;width:1567px;height:10px;border-radius:5px;background:#4c4c4c"></div><div class="abs" style="left:10.500px;top:1001.800px;width:7px;height:7px;border-radius:50%;background:#232323"></div><div class="abs" style="left:1567.500px;top:1001.800px;width:7px;height:7px;border-radius:50%;background:#232323"></div><div class="abs" style="left:58.300px;top:990px;width:1.800px;height:21.500px;background:#4772b3"></div><div class="abs" style="left:45.500px;top:970.600px;width:27px;height:19.600px;border-radius:4px;background:#4772b3"></div><div class="x" style="left:45.500px;width:27px;text-align:center;top:970.500px;color:#fff">1</div><svg style="left:0.500px;top:986px" width="6" height="11" viewBox="0 0 6 11"><path d="M.7.7l4.300 4.800-4.300 4.800" fill="none" stroke="#a0a0a0" stroke-width="1.100"/></svg><div class="abs" style="left:1579.500px;top:978px;width:4px;height:32px;background:#333;border-radius:2px"></div><svg style="left:1579.500px;top:986px" width="5" height="10" viewBox="0 0 5 10"><path d="M4.300.7l-3.500 4.300 3.500 4.300" fill="none" stroke="#7a7a7a" stroke-width="1"/></svg>
<svg style="left:11px;top:1015px" width="13" height="17" viewBox="0 0 13 17"><rect x="1" y="1" width="11" height="15" rx="4" fill="none" stroke="#b0b0b0" stroke-width="1.300"/><path d="M1.500 7.500v-3a3.500 3.500 0 0 1 3.500-3.500h1.500v6.500z" fill="#e0e0e0"/></svg><div class="x" style="left:31px;top:1013.500px;color:#a8a8a8">Select</div><svg style="left:224.5px;top:1015px" width="13" height="17" viewBox="0 0 13 17"><rect x="1" y="1" width="11" height="15" rx="4" fill="none" stroke="#b0b0b0" stroke-width="1.300"/><rect x="5" y="3" width="3" height="6" rx="1.500" fill="#e0e0e0"/></svg><div class="x" style="left:243px;top:1013.500px;color:#a8a8a8">Rotate View</div><svg style="left:437.5px;top:1015px" width="13" height="17" viewBox="0 0 13 17"><rect x="1" y="1" width="11" height="15" rx="4" fill="none" stroke="#b0b0b0" stroke-width="1.300"/><path d="M11.500 7.500v-3a3.500 3.500 0 0 0-3.500-3.500h-1.500v6.500z" fill="#e0e0e0"/></svg><div class="x" style="left:455px;top:1013.500px;color:#a8a8a8">Call Menu</div><div class="x" style="left:1850px;width:57px;text-align:right;top:1014.500px;color:#a0a0a0">4.2.3</div>

</div>
</body></html>
